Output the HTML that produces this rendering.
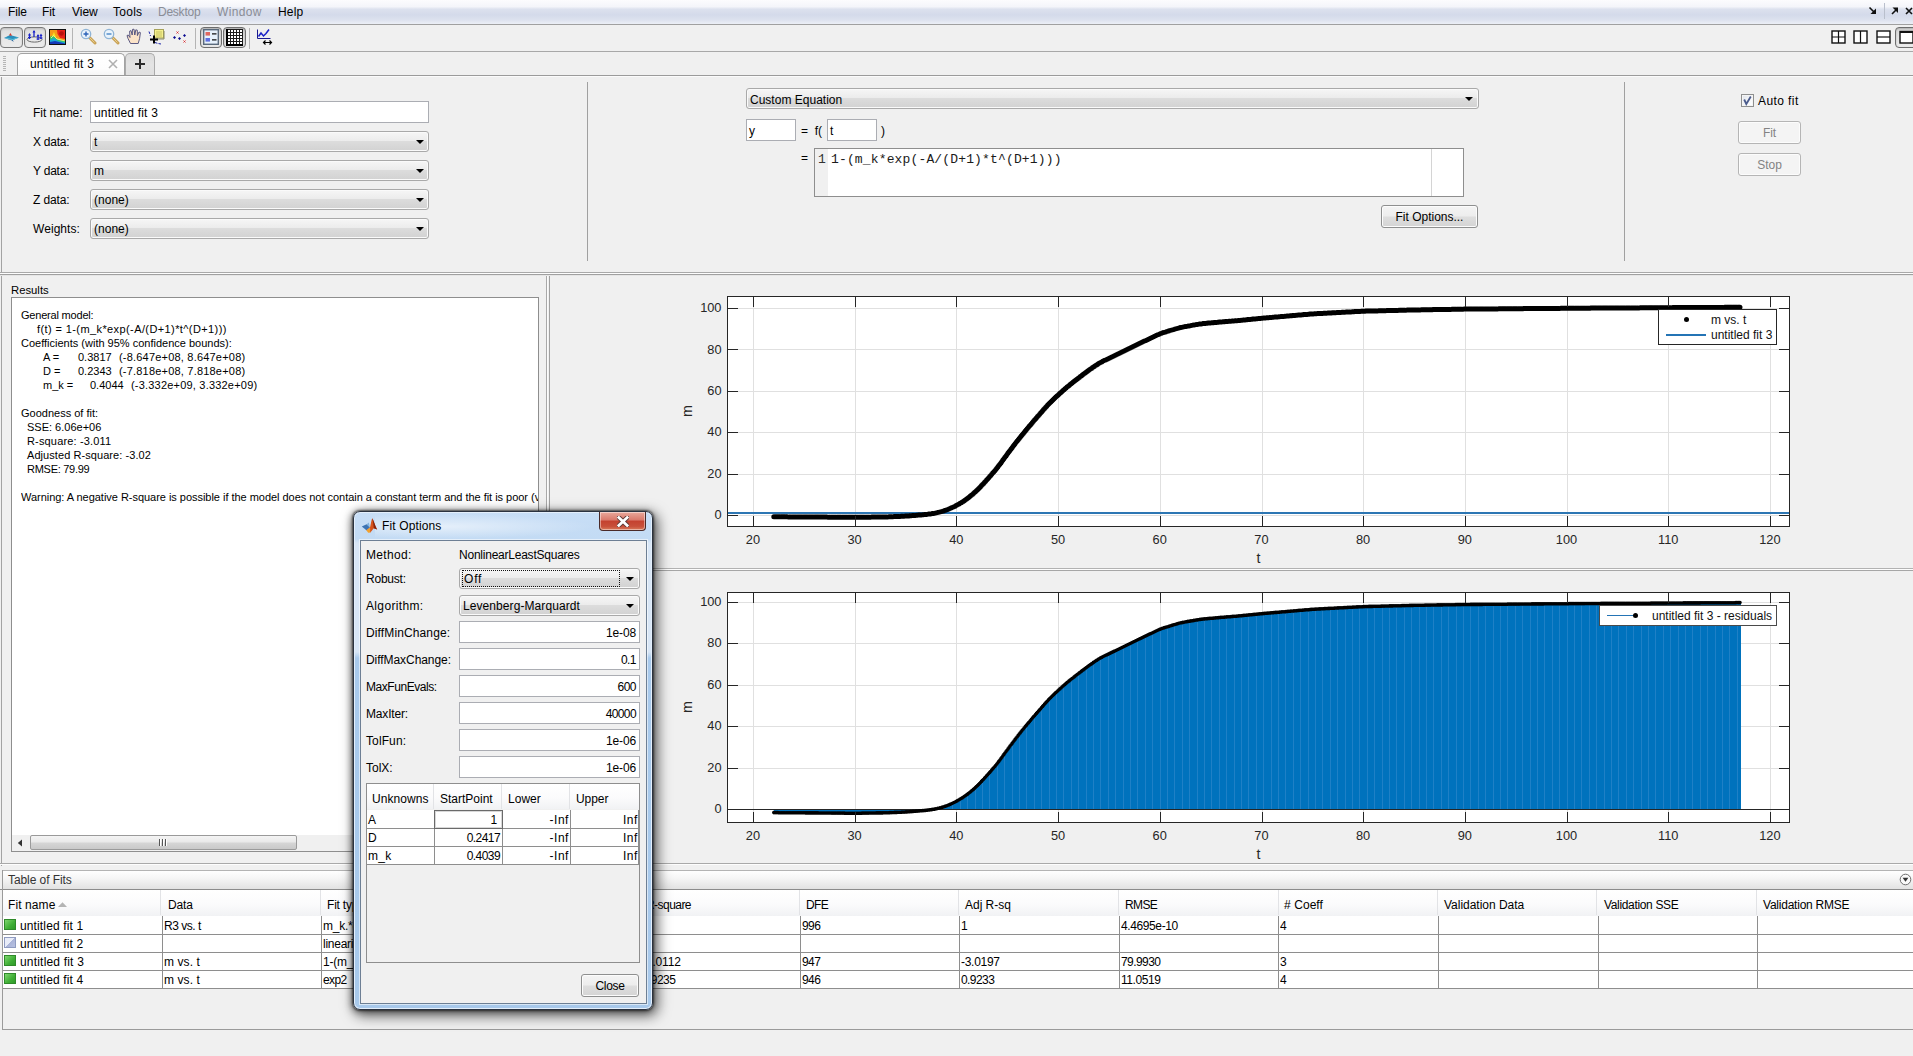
<!DOCTYPE html>
<html><head><meta charset="utf-8"><title>Curve Fitting Tool</title>
<style>
html,body{margin:0;padding:0}
body{width:1913px;height:1056px;overflow:hidden;background:#f0f0f0;position:relative;font-family:"Liberation Sans",sans-serif;font-size:12px;color:#000}
div,span{box-sizing:border-box}
.a{position:absolute}
.t{position:absolute;white-space:nowrap;line-height:14px;font-size:12px}
.r{position:absolute;white-space:nowrap;line-height:14px;font-size:11px}
.ax{position:absolute;white-space:nowrap;line-height:16px;font-size:12.8px;color:#262626}
.hl{position:absolute;height:1px;left:0;right:0}
.vl{position:absolute;width:1px}
.combo{position:absolute;height:21px;border:1px solid #a9a9a9;border-radius:3px;background:linear-gradient(#f6f6f6 0%,#ececec 45%,#dcdcdc 50%,#d2d2d2 100%);box-shadow:inset 0 0 0 1px #fafafa}
.combo i{position:absolute;right:4px;top:8px;width:0;height:0;border-left:4px solid transparent;border-right:4px solid transparent;border-top:4px solid #000}
.field{position:absolute;background:#fff;border:1px solid #abadb3}
.btn{position:absolute;border:1px solid #8e8f8f;border-radius:3px;background:linear-gradient(#f4f4f4 0%,#ededed 48%,#dedede 52%,#d4d4d4 100%);box-shadow:inset 0 0 0 1px #fcfcfc;text-align:center}
.btn.dis{border-color:#b5b5b5;background:#f4f4f4;color:#838383}
.th{position:absolute;top:891px;height:25px;background:linear-gradient(#ffffff 0%,#fafafb 50%,#f0f1f2 100%);border-right:1px solid #e3e4e6}
.cell{position:absolute;background:#fff;height:17px}
</style></head><body>

<!-- ===== menu bar ===== -->
<div class="a" style="left:0;top:0;width:1913px;height:24px;background:linear-gradient(#fcfcfe 0%,#f4f5fa 28%,#dce1ee 38%,#d4daea 62%,#dce1ee 82%,#eceff6 100%)"></div>
<div class="hl" style="top:24px;background:#a0a0a0"></div>
<div class="t" style="left:8px;top:5px;letter-spacing:-0.15px">File</div>
<div class="t" style="left:42px;top:5px;letter-spacing:-0.07px">Fit</div>
<div class="t" style="left:72px;top:5px;letter-spacing:-0.03px">View</div>
<div class="t" style="left:113px;top:5px;letter-spacing:0.27px">Tools</div>
<div class="t" style="left:158px;top:5px;color:#8a8d96;letter-spacing:-0.24px">Desktop</div>
<div class="t" style="left:217px;top:5px;color:#8a8d96;letter-spacing:0.36px">Window</div>
<div class="t" style="left:278px;top:5px;letter-spacing:0.20px">Help</div>
<svg class="a" style="left:1868px;top:6px" width="10" height="10" viewBox="0 0 10 10"><path d="M1.5 1.5L7 7" stroke="#111" stroke-width="1.6"/><path d="M8 2.5V8H2.5Z" fill="#111"/></svg>
<div class="vl" style="left:1884px;top:3px;height:16px;background:#b9bfcc"></div>
<svg class="a" style="left:1890px;top:6px" width="10" height="10" viewBox="0 0 10 10"><path d="M2 8L7 3" stroke="#111" stroke-width="1.6"/><path d="M2.5 1.5H8V7Z" fill="#111"/></svg>
<svg class="a" style="left:1905px;top:7px" width="9" height="9" viewBox="0 0 9 9"><path d="M1 1l6 6M7 1l-6 6" stroke="#111" stroke-width="1.6"/></svg>


<!-- ===== toolbar ===== -->
<div class="a" style="left:0;top:25px;width:1913px;height:26px;background:#f0f0f0"></div>
<div class="hl" style="top:51px;background:#a8a8a8"></div>
<!-- toggle buttons -->
<div class="a" style="left:0;top:27px;width:23px;height:21px;border:1px solid #7a7a7a;border-radius:4px;background:linear-gradient(#dcdcdc,#e8e8e8 60%,#ececec);box-shadow:inset 0 1px 2px #bdbdbd"></div>
<div class="a" style="left:24px;top:27px;width:22px;height:21px;border:1px solid #7a7a7a;border-radius:4px;background:linear-gradient(#dcdcdc,#e8e8e8 60%,#ececec);box-shadow:inset 0 1px 2px #bdbdbd"></div>
<svg class="a" style="left:3px;top:29px" width="17" height="17" viewBox="0 0 17 17">
 <path d="M1 9 L7 6 L16 8.5 L10 11 Z" fill="#2a8fbd"/><path d="M1 9 L10 11 L10.5 13 L9 11.5Z" fill="#1b5f9a"/>
 <path d="M6 6.3 L7.5 4 L9 6.8Z" fill="#d83a2a"/><path d="M3 9.2L10 10.5L14.5 8.8" stroke="#5fc0d8" stroke-width="1" fill="none"/>
</svg>
<svg class="a" style="left:26px;top:29px" width="18" height="17" viewBox="0 0 18 17">
 <ellipse cx="8.5" cy="10.5" rx="7.5" ry="2.6" fill="none" stroke="#6a6a6a" stroke-width="1"/>
 <path d="M3.5 10V5M8 8V2M12 11V6M15 10V6" stroke="#1a22c8" stroke-width="1.3" fill="none"/>
 <path d="M2 6.5L3.5 4L5 6.5ZM6.5 3.5L8 1L9.5 3.5ZM10.5 7.5L12 5L13.5 7.5ZM13.5 7L15 4.5L16.5 7Z" fill="#1a22c8"/>
 <path d="M2 8.5h3M10.5 10h3M13.5 9h3" stroke="#1a22c8" stroke-width="1"/>
</svg>
<svg class="a" style="left:49px;top:29px" width="17" height="16" viewBox="0 0 17 16">
 <rect x="0" y="0" width="17" height="16" fill="#111"/>
 <rect x="1" y="1" width="15" height="14" fill="#f59a1a"/>
 <path d="M1 15V8L4 6L8 10L16 12V15Z" fill="#35c46a"/><path d="M1 15V11L5 9L9 12L16 13.5V15Z" fill="#1aa7d8"/><path d="M1 15V13L6 12L16 14.5V15Z" fill="#1438b8"/>
 <path d="M8 1H16V10L11 9L8.5 5Z" fill="#e8231a"/><path d="M3 7L5 3L7 8Z" fill="#f6e11f"/><circle cx="12.5" cy="4.5" r="2.3" fill="#b8120e"/>
 <path d="M2 9L4.5 6.5L8 10L15.5 11.8" stroke="#f6f08a" stroke-width="0.9" fill="none"/>
</svg>
<div class="vl" style="left:72px;top:28px;height:21px;background:#b4b4b4"></div>
<!-- zoom in -->
<svg class="a" style="left:80px;top:28px" width="17" height="17" viewBox="0 0 17 17">
 <path d="M9 9L15 15" stroke="#c9a255" stroke-width="3" stroke-linecap="round"/><path d="M9.5 9.5L14.5 14.5" stroke="#e8cf8f" stroke-width="1"/>
 <circle cx="6" cy="6" r="4.7" fill="#e9f3fb" stroke="#8fb4d6" stroke-width="1.3"/>
 <path d="M3.5 6h5M6 3.5v5" stroke="#2b62b8" stroke-width="1.4"/>
</svg>
<svg class="a" style="left:103px;top:28px" width="17" height="17" viewBox="0 0 17 17">
 <path d="M9 9L15 15" stroke="#c9a255" stroke-width="3" stroke-linecap="round"/><path d="M9.5 9.5L14.5 14.5" stroke="#e8cf8f" stroke-width="1"/>
 <circle cx="6" cy="6" r="4.7" fill="#e9f3fb" stroke="#8fb4d6" stroke-width="1.3"/>
 <path d="M3.5 6h5" stroke="#4a86c8" stroke-width="1.4"/>
</svg>
<!-- hand -->
<svg class="a" style="left:126px;top:28px" width="17" height="17" viewBox="0 0 17 17">
 <path d="M4.5 15.5 L2 10.5 L1 7.5 L2.3 7 L4 9.5 L3.6 3.2 L5 2.6 L6.2 7 L6.5 1.4 L8 1.2 L8.8 7 L9.8 1.8 L11.3 2.2 L11.4 7.6 L13 4 L14.4 4.6 L13.6 10.5 L12.2 15.5 Z" fill="#fbe3c8" stroke="#4a4a78" stroke-width="0.9" stroke-linejoin="round"/>
</svg>
<!-- data cursor -->
<svg class="a" style="left:148px;top:28px" width="18" height="18" viewBox="0 0 18 18">
 <rect x="6.5" y="1.5" width="9" height="8.5" fill="#f5f08c" stroke="#a6a25a" stroke-width="1"/><rect x="15.5" y="3" width="1" height="8" fill="#8a8a60"/><rect x="8" y="10.5" width="8" height="1" fill="#8a8a60"/>
 <path d="M8 4h6M8 6h6M8 8h6" stroke="#b9b45c" stroke-width="0.8"/>
 <path d="M1 3.5L2.5 8M7 14.5L10 15.5L13 16" stroke="#1a22a8" stroke-width="1" stroke-dasharray="2.5 1.2" fill="none"/>
 <path d="M2 11.5h8M6 7.5v8" stroke="#000" stroke-width="2"/>
</svg>
<!-- exclude dots -->
<svg class="a" style="left:172px;top:29px" width="16" height="16" viewBox="0 0 16 16">
 <path d="M2.5 7L4 8.5L2.5 10L1 8.5ZM7.5 8L9 9.5L7.5 11L6 9.5ZM12.5 5L14 6.5L12.5 8L11 6.5Z" fill="#0a0a90"/>
 <path d="M4.5 2.5l2 2m0-2l-2 2M11.5 11.5l2 2m0-2l-2 2" stroke="#d8262a" stroke-width="0.9"/>
</svg>
<div class="vl" style="left:195px;top:28px;height:21px;background:#b4b4b4"></div>
<!-- legend / grid toggles -->
<div class="a" style="left:200px;top:27px;width:22px;height:21px;border:1px solid #6e6e6e;border-radius:4px;background:linear-gradient(#d4d4d4,#e4e4e4 60%,#eaeaea);box-shadow:inset 0 1px 2px #b0b0b0"></div>
<div class="a" style="left:223px;top:27px;width:23px;height:21px;border:1px solid #6e6e6e;border-radius:4px;background:linear-gradient(#cfcfcf,#dedede 60%,#e6e6e6);box-shadow:inset 0 1px 2px #a8a8a8"></div>
<svg class="a" style="left:203px;top:29px" width="16" height="17" viewBox="0 0 16 17">
 <rect x="0.7" y="0.7" width="14.6" height="14.6" fill="#e6f1fc" stroke="#5a6a7c" stroke-width="1.4"/>
 <rect x="2.5" y="3" width="4.5" height="3.6" fill="#e0685f"/><rect x="2.5" y="9" width="4.5" height="3.6" fill="#5f6fe0"/>
 <path d="M9 4.8h4.5M9 10.8h4.5" stroke="#111" stroke-width="1.3"/>
</svg>
<svg class="a" style="left:226px;top:29px" width="17" height="17" viewBox="0 0 17 17" shape-rendering="crispEdges">
 <rect x="1" y="0" width="16" height="16" fill="#fff"/>
 <path d="M4.5 0v16M7.5 0v16M10.5 0v16M13.5 0v16M16.5 0v16M1 0.5h16M1 3.5h16M1 6.5h16M1 9.5h16M1 12.5h16" stroke="#1c1c1c" stroke-width="1"/>
 <path d="M1 0V16M0 15.5H17" stroke="#000" stroke-width="2" fill="none"/>
</svg>
<div class="vl" style="left:249px;top:28px;height:21px;background:#b4b4b4"></div>
<svg class="a" style="left:256px;top:28px" width="18" height="18" viewBox="0 0 18 18">
 <path d="M1.5 1.5V10.5H14.5" stroke="#1a1a90" stroke-width="1" fill="none"/>
 <path d="M2.5 8.5L5 5L7.5 8L10 5.5L13 1.5" stroke="#1a22c8" stroke-width="1.5" fill="none"/>
 <path d="M7.5 14.5h8M9.5 12.5l-2 2l2 2M13.5 12.5l2 2l-2 2" stroke="#000" stroke-width="1.2" fill="none"/>
</svg>
<!-- right side layout icons -->
<svg class="a" style="left:1831px;top:30px" width="16" height="15" viewBox="0 0 16 15"><rect x="1" y="1" width="13" height="12" fill="#fff" stroke="#111" stroke-width="1.4"/><path d="M7.5 1v12M1 7h13" stroke="#111" stroke-width="1.2"/></svg>
<svg class="a" style="left:1853px;top:30px" width="16" height="15" viewBox="0 0 16 15"><rect x="1" y="1" width="13" height="12" fill="#fff" stroke="#111" stroke-width="1.4"/><path d="M7.5 1v12" stroke="#111" stroke-width="1.2"/></svg>
<svg class="a" style="left:1876px;top:30px" width="16" height="15" viewBox="0 0 16 15"><rect x="1" y="1" width="13" height="12" fill="#fff" stroke="#111" stroke-width="1.4"/><path d="M1 7h13" stroke="#111" stroke-width="1.2"/></svg>
<div class="a" style="left:1895px;top:27px;width:24px;height:21px;border:1px solid #6e6e6e;border-radius:4px;background:linear-gradient(#d8d8d8,#e6e6e6 60%,#ececec);box-shadow:inset 0 1px 2px #b0b0b0"></div>
<svg class="a" style="left:1899px;top:30px" width="16" height="15" viewBox="0 0 16 15"><rect x="1" y="1.5" width="13" height="11.5" fill="#fff" stroke="#111" stroke-width="1.4"/><path d="M1 2h13" stroke="#111" stroke-width="2"/></svg>


<!-- ===== tab bar ===== -->
<div class="a" style="left:0;top:52px;width:1913px;height:23px;background:#f0f0f0"></div>
<div class="hl" style="top:75px;background:#9b9b9b"></div>
<div class="hl" style="top:76px;background:#fbfbfb"></div>
<!-- grip -->
<div class="a" style="left:3px;top:56px;width:3px;height:16px;background:repeating-linear-gradient(#b5b5b5 0,#b5b5b5 1px,transparent 1px,transparent 2px)"></div>
<!-- active tab -->
<div class="a" style="left:17px;top:53px;width:108px;height:22px;border:1px solid #a3a3a3;border-bottom:none;border-radius:5px 5px 0 0;background:linear-gradient(#ffffff,#fdfdfd 70%,#f6f6f6)"></div>
<div class="t" style="left:30px;top:57px;letter-spacing:0.19px">untitled fit 3</div>
<svg class="a" style="left:108px;top:59px" width="10" height="10" viewBox="0 0 10 10"><path d="M1 1l8 8M9 1l-8 8" stroke="#b0b0b0" stroke-width="1.6"/></svg>
<!-- plus tab -->
<div class="a" style="left:125px;top:53px;width:30px;height:22px;border:1px solid #ababab;border-bottom:none;border-radius:5px 5px 0 0;background:linear-gradient(#dcdcdc,#e4e4e4 50%,#e0e0e0)"></div>
<svg class="a" style="left:134px;top:58px" width="12" height="12" viewBox="0 0 12 12"><path d="M1 6h10M6 1v10" stroke="#2b2b2b" stroke-width="2"/></svg>


<!-- ===== top panel ===== -->
<div class="vl" style="left:1px;top:77px;height:196px;background:#a3a3a3"></div>
<div class="hl" style="top:272px;background:#a9a9a9"></div>
<div class="hl" style="top:273px;background:#fdfdfd"></div>
<div class="hl" style="top:274px;background:#a0a0a0"></div>
<div class="hl" style="top:275px;background:#e6e6e6"></div>
<div class="vl" style="left:587px;top:82px;height:179px;background:#a0a0a0"></div>
<div class="vl" style="left:1624px;top:82px;height:179px;background:#a0a0a0"></div>
<!-- left form -->
<div class="t" style="left:33px;top:106px;letter-spacing:-0.06px">Fit name:</div>
<div class="t" style="left:33px;top:135px;letter-spacing:-0.26px">X data:</div>
<div class="t" style="left:33px;top:164px;letter-spacing:-0.22px">Y data:</div>
<div class="t" style="left:33px;top:193px;letter-spacing:-0.14px">Z data:</div>
<div class="t" style="left:33px;top:222px;letter-spacing:0.06px">Weights:</div>
<div class="field" style="left:90px;top:101px;width:339px;height:22px"></div>
<div class="t" style="left:94px;top:106px;letter-spacing:0.19px">untitled fit 3</div>
<div class="combo" style="left:90px;top:131px;width:339px"><i></i></div>
<div class="combo" style="left:90px;top:160px;width:339px"><i></i></div>
<div class="combo" style="left:90px;top:189px;width:339px"><i></i></div>
<div class="combo" style="left:90px;top:218px;width:339px"><i></i></div>
<div class="t" style="left:94px;top:135px">t</div>
<div class="t" style="left:94px;top:164px">m</div>
<div class="t" style="left:94px;top:193px;letter-spacing:0.02px">(none)</div>
<div class="t" style="left:94px;top:222px;letter-spacing:0.02px">(none)</div>
<!-- middle -->
<div class="combo" style="left:746px;top:88px;width:733px"><i style="right:5px"></i></div>
<div class="t" style="left:750px;top:93px;letter-spacing:0.01px">Custom Equation</div>
<div class="field" style="left:746px;top:119px;width:50px;height:22px"></div>
<div class="t" style="left:749px;top:124px">y</div>
<div class="t" style="left:801px;top:124px">=&nbsp;&nbsp;f(</div>
<div class="field" style="left:827px;top:119px;width:50px;height:22px"></div>
<div class="t" style="left:830px;top:124px">t</div>
<div class="t" style="left:881px;top:124px">)</div>
<div class="t" style="left:801px;top:151px">=</div>
<div class="field" style="left:814px;top:148px;width:650px;height:49px;border-color:#8e8e8e"></div>
<div class="a" style="left:815px;top:149px;width:13px;height:47px;background:#f0f0f0"></div>
<div class="vl" style="left:1431px;top:149px;height:47px;background:#d4d4d4"></div>
<div class="t" style="left:818px;top:153px;font-family:'Liberation Mono',monospace;font-size:13px;color:#333">1</div>
<div class="t" style="left:831px;top:153px;font-family:'Liberation Mono',monospace;font-size:13px;letter-spacing:0.15px;color:#1a1a1a">1-(m_k*exp(-A/(D+1)*t^(D+1)))</div>
<div class="btn" style="left:1381px;top:205px;width:97px;height:23px;line-height:22px;letter-spacing:-0.01px">Fit Options...</div>
<!-- right -->
<div class="a" style="left:1741px;top:94px;width:13px;height:13px;border:1px solid #8e8f8f;background:linear-gradient(135deg,#dfe3ea,#f6f7f9 60%,#fff);box-shadow:inset 0 0 0 1px #f4f4f4"></div>
<svg class="a" style="left:1742px;top:95px" width="11" height="11" viewBox="0 0 11 11"><path d="M2.2 4.5L4.3 9L8.8 1.5" stroke="#4a5b8c" stroke-width="1.8" fill="none"/></svg>
<div class="t" style="left:1758px;top:94px;letter-spacing:0.42px">Auto fit</div>
<div class="btn dis" style="left:1738px;top:121px;width:63px;height:23px;line-height:22px;letter-spacing:-0.07px">Fit</div>
<div class="btn dis" style="left:1738px;top:153px;width:63px;height:23px;line-height:22px">Stop</div>


<!-- ===== results ===== -->
<div class="vl" style="left:1px;top:276px;height:590px;background:#a3a3a3"></div>
<div class="t" style="left:11px;top:283px;font-size:11.3px">Results</div>
<div class="a" style="left:11px;top:297px;width:528px;height:555px;background:#fff;border:1px solid #8e8e8e"></div>
<div class="r" style="left:21px;top:308px;letter-spacing:-0.2px">General model:</div>
<div class="r" style="left:37px;top:322px;letter-spacing:0.4px">f(t) = 1-(m_k*exp(-A/(D+1)*t^(D+1)))</div>
<div class="r" style="left:21px;top:336px">Coefficients (with 95% confidence bounds):</div>
<div class="r" style="left:43px;top:350px">A =</div><div class="r" style="left:78px;top:350px">0.3817</div><div class="r" style="left:119px;top:350px;letter-spacing:0.2px">(-8.647e+08, 8.647e+08)</div>
<div class="r" style="left:43px;top:364px">D =</div><div class="r" style="left:78px;top:364px">0.2343</div><div class="r" style="left:119px;top:364px;letter-spacing:0.2px">(-7.818e+08, 7.818e+08)</div>
<div class="r" style="left:43px;top:378px">m_k =</div><div class="r" style="left:90px;top:378px">0.4044</div><div class="r" style="left:131px;top:378px;letter-spacing:0.2px">(-3.332e+09, 3.332e+09)</div>
<div class="r" style="left:21px;top:406px">Goodness of fit:</div>
<div class="r" style="left:27px;top:420px">SSE: 6.06e+06</div>
<div class="r" style="left:27px;top:434px;letter-spacing:0.16px">R-square: -3.011</div>
<div class="r" style="left:27px;top:448px;letter-spacing:0.07px">Adjusted R-square: -3.02</div>
<div class="r" style="left:27px;top:462px;letter-spacing:-0.27px">RMSE: 79.99</div>
<div class="a" style="left:21px;top:490px;width:517px;height:14px;overflow:hidden"><div class="r" style="left:0;top:0;letter-spacing:-0.03px">Warning: A negative R-square is possible if the model does not contain a constant term and the fit is poor (v</div></div>
<!-- h scrollbar -->
<div class="a" style="left:12px;top:835px;width:526px;height:16px;background:#f0f0f0"></div>
<svg class="a" style="left:17px;top:839px" width="6" height="8" viewBox="0 0 6 8"><path d="M5 0.5V7.5L0.8 4Z" fill="#333"/></svg>
<div class="a" style="left:30px;top:835px;width:267px;height:15px;border:1px solid #9a9a9a;border-radius:2px;background:linear-gradient(#f4f4f4 0%,#e9e9e9 48%,#d6d6d6 52%,#c9c9c9 100%)"></div>
<div class="a" style="left:159px;top:839px;width:8px;height:7px;background:repeating-linear-gradient(90deg,#555 0,#555 1px,#fff 1px,#fff 2px,transparent 2px,transparent 3px)"></div>


<!-- ===== plots ===== -->
<!-- vertical divider -->
<div class="vl" style="left:546px;top:276px;height:588px;background:#a8a8a8"></div>
<div class="vl" style="left:547px;top:276px;height:588px;background:#fbfbfb"></div>
<div class="vl" style="left:548px;top:276px;height:588px;background:#f0f0f0"></div>
<div class="vl" style="left:549px;top:276px;height:588px;background:#a0a0a0"></div>
<!-- mid horizontal divider -->
<div class="a" style="left:550px;top:568px;width:1363px;height:1px;background:#b2b2b2"></div>
<div class="a" style="left:550px;top:569px;width:1363px;height:1px;background:#fdfdfd"></div>
<div class="a" style="left:550px;top:570px;width:1363px;height:1px;background:#a6a6a6"></div>
<!-- bottom divider -->
<div class="hl" style="top:863px;background:#a9a9a9"></div>
<div class="hl" style="top:864px;background:#fdfdfd"></div>

<svg style="position:absolute;left:727px;top:296px;overflow:visible" width="1063" height="231" viewBox="0 0 1063 231">
<rect x="0.5" y="0.5" width="1062" height="230" fill="#fff"/>
<path d="M26.5 0V231M128.5 0V231M229.5 0V231M331.5 0V231M433.5 0V231M535.5 0V231M636.5 0V231M738.5 0V231M840.5 0V231M941.5 0V231M1043.5 0V231M0 219.5H1063M0 178.5H1063M0 136.5H1063M0 95.5H1063M0 53.5H1063M0 12.5H1063" stroke="#e0e0e0" stroke-width="1" fill="none"/>
<path d="M0 217.0H1063" stroke="#2d76b3" stroke-width="2" fill="none"/>
<path d="M46.8 220.8h0M47.9 220.8h0M48.9 220.8h0M49.9 220.8h0M50.9 220.8h0M51.9 220.8h0M52.9 220.8h0M54.0 220.8h0M55.0 220.8h0M56.0 220.8h0M57.0 220.8h0M58.0 220.8h0M59.1 220.8h0M60.1 220.8h0M61.1 220.9h0M62.1 220.9h0M63.1 220.9h0M64.1 220.9h0M65.2 220.9h0M66.2 220.9h0M67.2 220.9h0M68.2 220.9h0M69.2 220.9h0M70.3 220.9h0M71.3 220.9h0M72.3 220.9h0M73.3 220.9h0M74.3 221.0h0M75.3 221.0h0M76.4 221.0h0M77.4 221.0h0M78.4 221.0h0M79.4 221.0h0M80.4 221.0h0M81.5 221.0h0M82.5 221.0h0M83.5 221.0h0M84.5 221.0h0M85.5 221.0h0M86.5 221.0h0M87.6 221.1h0M88.6 221.1h0M89.6 221.1h0M90.6 221.1h0M91.6 221.1h0M92.7 221.1h0M93.7 221.1h0M94.7 221.1h0M95.7 221.1h0M96.7 221.1h0M97.7 221.1h0M98.8 221.1h0M99.8 221.1h0M100.8 221.2h0M101.8 221.2h0M102.8 221.2h0M103.9 221.2h0M104.9 221.2h0M105.9 221.2h0M106.9 221.2h0M107.9 221.2h0M108.9 221.2h0M110.0 221.2h0M111.0 221.2h0M112.0 221.2h0M113.0 221.2h0M114.0 221.3h0M115.1 221.3h0M116.1 221.3h0M117.1 221.3h0M118.1 221.3h0M119.1 221.3h0M120.1 221.3h0M121.2 221.3h0M122.2 221.3h0M123.2 221.3h0M124.2 221.3h0M125.2 221.3h0M126.2 221.3h0M127.3 221.3h0M128.3 221.3h0M129.3 221.3h0M130.3 221.3h0M131.3 221.3h0M132.4 221.3h0M133.4 221.3h0M134.4 221.3h0M135.4 221.3h0M136.4 221.3h0M137.4 221.2h0M138.5 221.2h0M139.5 221.2h0M140.5 221.2h0M141.5 221.2h0M142.5 221.2h0M143.6 221.2h0M144.6 221.1h0M145.6 221.1h0M146.6 221.1h0M147.6 221.1h0M148.6 221.1h0M149.7 221.1h0M150.7 221.1h0M151.7 221.0h0M152.7 221.0h0M153.7 221.0h0M154.8 221.0h0M155.8 221.0h0M156.8 221.0h0M157.8 220.9h0M158.8 220.9h0M159.8 220.9h0M160.9 220.9h0M161.9 220.8h0M162.9 220.8h0M163.9 220.7h0M164.9 220.7h0M166.0 220.7h0M167.0 220.6h0M168.0 220.6h0M169.0 220.5h0M170.0 220.5h0M171.0 220.4h0M172.1 220.4h0M173.1 220.4h0M174.1 220.3h0M175.1 220.3h0M176.1 220.2h0M177.2 220.2h0M178.2 220.1h0M179.2 220.1h0M180.2 220.0h0M181.2 219.9h0M182.2 219.9h0M183.3 219.8h0M184.3 219.7h0M185.3 219.6h0M186.3 219.5h0M187.3 219.4h0M188.4 219.4h0M189.4 219.3h0M190.4 219.2h0M191.4 219.1h0M192.4 219.0h0M193.4 218.9h0M194.5 218.9h0M195.5 218.8h0M196.5 218.7h0M197.5 218.6h0M198.5 218.5h0M199.6 218.4h0M200.6 218.3h0M201.6 218.1h0M202.6 218.0h0M203.6 217.9h0M204.6 217.7h0M205.7 217.6h0M206.7 217.4h0M207.7 217.2h0M208.7 217.0h0M209.7 216.8h0M210.7 216.6h0M211.8 216.3h0M212.8 216.1h0M213.8 215.8h0M214.8 215.5h0M215.8 215.2h0M216.9 214.9h0M217.9 214.6h0M218.9 214.2h0M219.9 213.8h0M220.9 213.4h0M221.9 213.0h0M223.0 212.6h0M224.0 212.1h0M225.0 211.6h0M226.0 211.2h0M227.0 210.7h0M228.1 210.2h0M229.1 209.6h0M230.1 209.1h0M231.1 208.5h0M232.1 207.9h0M233.1 207.3h0M234.2 206.7h0M235.2 206.0h0M236.2 205.4h0M237.2 204.7h0M238.2 204.0h0M239.3 203.3h0M240.3 202.5h0M241.3 201.8h0M242.3 201.0h0M243.3 200.1h0M244.3 199.3h0M245.4 198.4h0M246.4 197.5h0M247.4 196.6h0M248.4 195.7h0M249.4 194.8h0M250.5 193.8h0M251.5 192.8h0M252.5 191.8h0M253.5 190.7h0M254.5 189.6h0M255.5 188.5h0M256.6 187.4h0M257.6 186.3h0M258.6 185.2h0M259.6 184.1h0M260.6 182.9h0M261.7 181.8h0M262.7 180.6h0M263.7 179.5h0M264.7 178.3h0M265.7 177.1h0M266.7 175.9h0M267.8 174.7h0M268.8 173.5h0M269.8 172.2h0M270.8 170.9h0M271.8 169.6h0M272.9 168.3h0M273.9 166.9h0M274.9 165.5h0M275.9 164.1h0M276.9 162.7h0M277.9 161.3h0M279.0 159.9h0M280.0 158.5h0M281.0 157.1h0M282.0 155.8h0M283.0 154.4h0M284.1 153.0h0M285.1 151.7h0M286.1 150.3h0M287.1 149.0h0M288.1 147.7h0M289.1 146.3h0M290.2 145.0h0M291.2 143.7h0M292.2 142.4h0M293.2 141.2h0M294.2 139.9h0M295.2 138.7h0M296.3 137.4h0M297.3 136.2h0M298.3 134.9h0M299.3 133.7h0M300.3 132.5h0M301.4 131.3h0M302.4 130.1h0M303.4 128.9h0M304.4 127.7h0M305.4 126.5h0M306.4 125.3h0M307.5 124.1h0M308.5 122.9h0M309.5 121.8h0M310.5 120.6h0M311.5 119.4h0M312.6 118.3h0M313.6 117.1h0M314.6 115.9h0M315.6 114.8h0M316.6 113.6h0M317.6 112.5h0M318.7 111.3h0M319.7 110.2h0M320.7 109.1h0M321.7 108.0h0M322.7 107.0h0M323.8 106.0h0M324.8 105.0h0M325.8 104.0h0M326.8 103.0h0M327.8 102.0h0M328.8 101.1h0M329.9 100.1h0M330.9 99.2h0M331.9 98.2h0M332.9 97.3h0M333.9 96.4h0M335.0 95.5h0M336.0 94.6h0M337.0 93.7h0M338.0 92.8h0M339.0 91.9h0M340.0 91.1h0M341.1 90.2h0M342.1 89.4h0M343.1 88.5h0M344.1 87.7h0M345.1 86.9h0M346.2 86.1h0M347.2 85.3h0M348.2 84.5h0M349.2 83.8h0M350.2 83.0h0M351.2 82.2h0M352.3 81.4h0M353.3 80.6h0M354.3 79.9h0M355.3 79.1h0M356.3 78.3h0M357.4 77.6h0M358.4 76.8h0M359.4 76.0h0M360.4 75.3h0M361.4 74.5h0M362.4 73.8h0M363.5 73.1h0M364.5 72.4h0M365.5 71.6h0M366.5 70.9h0M367.5 70.2h0M368.6 69.5h0M369.6 68.9h0M370.6 68.2h0M371.6 67.6h0M372.6 67.0h0M373.6 66.4h0M374.7 65.9h0M375.7 65.3h0M376.7 64.8h0M377.7 64.3h0M378.7 63.9h0M379.7 63.4h0M380.8 62.9h0M381.8 62.4h0M382.8 61.9h0M383.8 61.4h0M384.8 60.9h0M385.9 60.4h0M386.9 60.0h0M387.9 59.5h0M388.9 59.0h0M389.9 58.5h0M390.9 58.0h0M392.0 57.5h0M393.0 57.0h0M394.0 56.5h0M395.0 56.0h0M396.0 55.5h0M397.1 55.0h0M398.1 54.5h0M399.1 54.1h0M400.1 53.6h0M401.1 53.1h0M402.1 52.6h0M403.2 52.1h0M404.2 51.6h0M405.2 51.1h0M406.2 50.6h0M407.2 50.1h0M408.3 49.6h0M409.3 49.1h0M410.3 48.6h0M411.3 48.1h0M412.3 47.6h0M413.3 47.1h0M414.4 46.6h0M415.4 46.1h0M416.4 45.6h0M417.4 45.1h0M418.4 44.7h0M419.5 44.2h0M420.5 43.7h0M421.5 43.2h0M422.5 42.7h0M423.5 42.2h0M424.5 41.7h0M425.6 41.2h0M426.6 40.8h0M427.6 40.3h0M428.6 39.8h0M429.6 39.3h0M430.7 38.8h0M431.7 38.4h0M432.7 38.0h0M433.7 37.6h0M434.7 37.2h0M435.7 36.8h0M436.8 36.5h0M437.8 36.2h0M438.8 35.9h0M439.8 35.6h0M440.8 35.2h0M441.9 34.9h0M442.9 34.6h0M443.9 34.3h0M444.9 34.0h0M445.9 33.7h0M446.9 33.4h0M448.0 33.1h0M449.0 32.8h0M450.0 32.5h0M451.0 32.2h0M452.0 31.9h0M453.1 31.6h0M454.1 31.4h0M455.1 31.2h0M456.1 30.9h0M457.1 30.7h0M458.1 30.6h0M459.2 30.4h0M460.2 30.2h0M461.2 30.0h0M462.2 29.9h0M463.2 29.7h0M464.2 29.5h0M465.3 29.3h0M466.3 29.1h0M467.3 29.0h0M468.3 28.8h0M469.3 28.6h0M470.4 28.4h0M471.4 28.3h0M472.4 28.1h0M473.4 28.0h0M474.4 27.9h0M475.4 27.7h0M476.5 27.6h0M477.5 27.5h0M478.5 27.4h0M479.5 27.3h0M480.5 27.2h0M481.6 27.1h0M482.6 27.0h0M483.6 26.9h0M484.6 26.8h0M485.6 26.8h0M486.6 26.7h0M487.7 26.6h0M488.7 26.5h0M489.7 26.4h0M490.7 26.3h0M491.7 26.2h0M492.8 26.1h0M493.8 26.0h0M494.8 25.9h0M495.8 25.8h0M496.8 25.8h0M497.8 25.7h0M498.9 25.6h0M499.9 25.5h0M500.9 25.4h0M501.9 25.3h0M502.9 25.3h0M504.0 25.2h0M505.0 25.1h0M506.0 25.0h0M507.0 24.9h0M508.0 24.8h0M509.0 24.8h0M510.1 24.7h0M511.1 24.6h0M512.1 24.5h0M513.1 24.4h0M514.1 24.3h0M515.2 24.2h0M516.2 24.1h0M517.2 24.0h0M518.2 23.9h0M519.2 23.8h0M520.2 23.7h0M521.3 23.6h0M522.3 23.5h0M523.3 23.4h0M524.3 23.3h0M525.3 23.2h0M526.4 23.1h0M527.4 23.0h0M528.4 22.9h0M529.4 22.8h0M530.4 22.7h0M531.4 22.6h0M532.5 22.5h0M533.5 22.4h0M534.5 22.3h0M535.5 22.2h0M536.5 22.1h0M537.6 22.0h0M538.6 21.9h0M539.6 21.8h0M540.6 21.7h0M541.6 21.7h0M542.6 21.6h0M543.7 21.5h0M544.7 21.4h0M545.7 21.3h0M546.7 21.2h0M547.7 21.1h0M548.7 21.1h0M549.8 21.0h0M550.8 20.9h0M551.8 20.8h0M552.8 20.7h0M553.8 20.6h0M554.9 20.5h0M555.9 20.4h0M556.9 20.4h0M557.9 20.3h0M558.9 20.2h0M559.9 20.1h0M561.0 20.0h0M562.0 19.9h0M563.0 19.8h0M564.0 19.7h0M565.0 19.7h0M566.1 19.6h0M567.1 19.5h0M568.1 19.4h0M569.1 19.3h0M570.1 19.2h0M571.1 19.1h0M572.2 19.1h0M573.2 19.0h0M574.2 18.9h0M575.2 18.8h0M576.2 18.7h0M577.3 18.6h0M578.3 18.5h0M579.3 18.4h0M580.3 18.4h0M581.3 18.3h0M582.3 18.2h0M583.4 18.1h0M584.4 18.0h0M585.4 18.0h0M586.4 17.9h0M587.4 17.8h0M588.5 17.8h0M589.5 17.7h0M590.5 17.6h0M591.5 17.6h0M592.5 17.5h0M593.5 17.5h0M594.6 17.4h0M595.6 17.4h0M596.6 17.3h0M597.6 17.3h0M598.6 17.2h0M599.7 17.2h0M600.7 17.1h0M601.7 17.0h0M602.7 17.0h0M603.7 16.9h0M604.7 16.9h0M605.8 16.8h0M606.8 16.8h0M607.8 16.7h0M608.8 16.7h0M609.8 16.6h0M610.9 16.6h0M611.9 16.5h0M612.9 16.5h0M613.9 16.4h0M614.9 16.3h0M615.9 16.3h0M617.0 16.2h0M618.0 16.2h0M619.0 16.1h0M620.0 16.1h0M621.0 16.0h0M622.1 16.0h0M623.1 15.9h0M624.1 15.9h0M625.1 15.8h0M626.1 15.8h0M627.1 15.7h0M628.2 15.6h0M629.2 15.6h0M630.2 15.5h0M631.2 15.5h0M632.2 15.4h0M633.2 15.4h0M634.3 15.3h0M635.3 15.3h0M636.3 15.2h0M637.3 15.2h0M638.3 15.2h0M639.4 15.1h0M640.4 15.1h0M641.4 15.1h0M642.4 15.1h0M643.4 15.0h0M644.4 15.0h0M645.5 15.0h0M646.5 15.0h0M647.5 14.9h0M648.5 14.9h0M649.5 14.9h0M650.6 14.9h0M651.6 14.8h0M652.6 14.8h0M653.6 14.8h0M654.6 14.8h0M655.6 14.7h0M656.7 14.7h0M657.7 14.7h0M658.7 14.7h0M659.7 14.6h0M660.7 14.6h0M661.8 14.6h0M662.8 14.6h0M663.8 14.5h0M664.8 14.5h0M665.8 14.5h0M666.8 14.5h0M667.9 14.4h0M668.9 14.4h0M669.9 14.4h0M670.9 14.4h0M671.9 14.3h0M673.0 14.3h0M674.0 14.3h0M675.0 14.3h0M676.0 14.2h0M677.0 14.2h0M678.0 14.2h0M679.1 14.2h0M680.1 14.1h0M681.1 14.1h0M682.1 14.1h0M683.1 14.1h0M684.2 14.0h0M685.2 14.0h0M686.2 14.0h0M687.2 14.0h0M688.2 13.9h0M689.2 13.9h0M690.3 13.9h0M691.3 13.9h0M692.3 13.9h0M693.3 13.9h0M694.3 13.8h0M695.4 13.8h0M696.4 13.8h0M697.4 13.8h0M698.4 13.8h0M699.4 13.8h0M700.4 13.7h0M701.5 13.7h0M702.5 13.7h0M703.5 13.7h0M704.5 13.7h0M705.5 13.7h0M706.6 13.6h0M707.6 13.6h0M708.6 13.6h0M709.6 13.6h0M710.6 13.6h0M711.6 13.6h0M712.7 13.5h0M713.7 13.5h0M714.7 13.5h0M715.7 13.5h0M716.7 13.5h0M717.7 13.5h0M718.8 13.4h0M719.8 13.4h0M720.8 13.4h0M721.8 13.4h0M722.8 13.4h0M723.9 13.4h0M724.9 13.3h0M725.9 13.3h0M726.9 13.3h0M727.9 13.3h0M728.9 13.3h0M730.0 13.3h0M731.0 13.2h0M732.0 13.2h0M733.0 13.2h0M734.0 13.2h0M735.1 13.2h0M736.1 13.2h0M737.1 13.1h0M738.1 13.1h0M739.1 13.1h0M740.1 13.1h0M741.2 13.1h0M742.2 13.1h0M743.2 13.1h0M744.2 13.1h0M745.2 13.1h0M746.3 13.1h0M747.3 13.0h0M748.3 13.0h0M749.3 13.0h0M750.3 13.0h0M751.3 13.0h0M752.4 13.0h0M753.4 13.0h0M754.4 13.0h0M755.4 13.0h0M756.4 13.0h0M757.5 13.0h0M758.5 13.0h0M759.5 12.9h0M760.5 12.9h0M761.5 12.9h0M762.5 12.9h0M763.6 12.9h0M764.6 12.9h0M765.6 12.9h0M766.6 12.9h0M767.6 12.9h0M768.7 12.9h0M769.7 12.9h0M770.7 12.9h0M771.7 12.8h0M772.7 12.8h0M773.7 12.8h0M774.8 12.8h0M775.8 12.8h0M776.8 12.8h0M777.8 12.8h0M778.8 12.8h0M779.9 12.8h0M780.9 12.8h0M781.9 12.8h0M782.9 12.8h0M783.9 12.8h0M784.9 12.7h0M786.0 12.7h0M787.0 12.7h0M788.0 12.7h0M789.0 12.7h0M790.0 12.7h0M791.1 12.7h0M792.1 12.7h0M793.1 12.7h0M794.1 12.7h0M795.1 12.7h0M796.1 12.7h0M797.2 12.6h0M798.2 12.6h0M799.2 12.6h0M800.2 12.6h0M801.2 12.6h0M802.2 12.6h0M803.3 12.6h0M804.3 12.6h0M805.3 12.6h0M806.3 12.6h0M807.3 12.6h0M808.4 12.6h0M809.4 12.5h0M810.4 12.5h0M811.4 12.5h0M812.4 12.5h0M813.4 12.5h0M814.5 12.5h0M815.5 12.5h0M816.5 12.5h0M817.5 12.5h0M818.5 12.5h0M819.6 12.5h0M820.6 12.5h0M821.6 12.4h0M822.6 12.4h0M823.6 12.4h0M824.6 12.4h0M825.7 12.4h0M826.7 12.4h0M827.7 12.4h0M828.7 12.4h0M829.7 12.4h0M830.8 12.4h0M831.8 12.4h0M832.8 12.4h0M833.8 12.3h0M834.8 12.3h0M835.8 12.3h0M836.9 12.3h0M837.9 12.3h0M838.9 12.3h0M839.9 12.3h0M840.9 12.3h0M842.0 12.3h0M843.0 12.3h0M844.0 12.3h0M845.0 12.3h0M846.0 12.3h0M847.0 12.3h0M848.1 12.2h0M849.1 12.2h0M850.1 12.2h0M851.1 12.2h0M852.1 12.2h0M853.2 12.2h0M854.2 12.2h0M855.2 12.2h0M856.2 12.2h0M857.2 12.2h0M858.2 12.2h0M859.3 12.2h0M860.3 12.2h0M861.3 12.2h0M862.3 12.2h0M863.3 12.2h0M864.4 12.1h0M865.4 12.1h0M866.4 12.1h0M867.4 12.1h0M868.4 12.1h0M869.4 12.1h0M870.5 12.1h0M871.5 12.1h0M872.5 12.1h0M873.5 12.1h0M874.5 12.1h0M875.6 12.1h0M876.6 12.1h0M877.6 12.1h0M878.6 12.1h0M879.6 12.1h0M880.6 12.0h0M881.7 12.0h0M882.7 12.0h0M883.7 12.0h0M884.7 12.0h0M885.7 12.0h0M886.7 12.0h0M887.8 12.0h0M888.8 12.0h0M889.8 12.0h0M890.8 12.0h0M891.8 12.0h0M892.9 12.0h0M893.9 12.0h0M894.9 12.0h0M895.9 12.0h0M896.9 11.9h0M897.9 11.9h0M899.0 11.9h0M900.0 11.9h0M901.0 11.9h0M902.0 11.9h0M903.0 11.9h0M904.1 11.9h0M905.1 11.9h0M906.1 11.9h0M907.1 11.9h0M908.1 11.9h0M909.1 11.9h0M910.2 11.9h0M911.2 11.9h0M912.2 11.9h0M913.2 11.8h0M914.2 11.8h0M915.3 11.8h0M916.3 11.8h0M917.3 11.8h0M918.3 11.8h0M919.3 11.8h0M920.3 11.8h0M921.4 11.8h0M922.4 11.8h0M923.4 11.8h0M924.4 11.8h0M925.4 11.8h0M926.5 11.8h0M927.5 11.8h0M928.5 11.8h0M929.5 11.7h0M930.5 11.7h0M931.5 11.7h0M932.6 11.7h0M933.6 11.7h0M934.6 11.7h0M935.6 11.7h0M936.6 11.7h0M937.7 11.7h0M938.7 11.7h0M939.7 11.7h0M940.7 11.7h0M941.7 11.7h0M942.7 11.7h0M943.8 11.7h0M944.8 11.7h0M945.8 11.6h0M946.8 11.6h0M947.8 11.6h0M948.9 11.6h0M949.9 11.6h0M950.9 11.6h0M951.9 11.6h0M952.9 11.6h0M953.9 11.6h0M955.0 11.6h0M956.0 11.6h0M957.0 11.6h0M958.0 11.6h0M959.0 11.6h0M960.1 11.6h0M961.1 11.6h0M962.1 11.6h0M963.1 11.5h0M964.1 11.5h0M965.1 11.5h0M966.2 11.5h0M967.2 11.5h0M968.2 11.5h0M969.2 11.5h0M970.2 11.5h0M971.2 11.5h0M972.3 11.5h0M973.3 11.5h0M974.3 11.5h0M975.3 11.5h0M976.3 11.5h0M977.4 11.5h0M978.4 11.5h0M979.4 11.5h0M980.4 11.4h0M981.4 11.4h0M982.4 11.4h0M983.5 11.4h0M984.5 11.4h0M985.5 11.4h0M986.5 11.4h0M987.5 11.4h0M988.6 11.4h0M989.6 11.4h0M990.6 11.4h0M991.6 11.4h0M992.6 11.4h0M993.6 11.4h0M994.7 11.4h0M995.7 11.4h0M996.7 11.4h0M997.7 11.3h0M998.7 11.3h0M999.8 11.3h0M1000.8 11.3h0M1001.8 11.3h0M1002.8 11.3h0M1003.8 11.3h0M1004.8 11.3h0M1005.9 11.3h0M1006.9 11.3h0M1007.9 11.3h0M1008.9 11.3h0M1009.9 11.3h0M1011.0 11.3h0M1012.0 11.3h0M1013.0 11.3h0" stroke="#000" stroke-width="5" stroke-linecap="round" fill="none"/>
<path d="M26.5 0v11M26.5 231v-11M128.5 0v11M128.5 231v-11M229.5 0v11M229.5 231v-11M331.5 0v11M331.5 231v-11M433.5 0v11M433.5 231v-11M535.5 0v11M535.5 231v-11M636.5 0v11M636.5 231v-11M738.5 0v11M738.5 231v-11M840.5 0v11M840.5 231v-11M941.5 0v11M941.5 231v-11M1043.5 0v11M1043.5 231v-11M0 219.5h11M1063 219.5h-11M0 178.5h11M1063 178.5h-11M0 136.5h11M1063 136.5h-11M0 95.5h11M1063 95.5h-11M0 53.5h11M1063 53.5h-11M0 12.5h11M1063 12.5h-11" stroke="#262626" stroke-width="1" fill="none"/>
<rect x="0.5" y="0.5" width="1062" height="230" fill="none" stroke="#262626" stroke-width="1"/>
</svg>
<div class="ax" style="left:732.9px;top:531.5px;width:40px;text-align:center">20</div>
<div class="ax" style="left:834.6px;top:531.5px;width:40px;text-align:center">30</div>
<div class="ax" style="left:936.3px;top:531.5px;width:40px;text-align:center">40</div>
<div class="ax" style="left:1038.0px;top:531.5px;width:40px;text-align:center">50</div>
<div class="ax" style="left:1139.7px;top:531.5px;width:40px;text-align:center">60</div>
<div class="ax" style="left:1241.4px;top:531.5px;width:40px;text-align:center">70</div>
<div class="ax" style="left:1343.1px;top:531.5px;width:40px;text-align:center">80</div>
<div class="ax" style="left:1444.8px;top:531.5px;width:40px;text-align:center">90</div>
<div class="ax" style="left:1546.5px;top:531.5px;width:40px;text-align:center">100</div>
<div class="ax" style="left:1648.2px;top:531.5px;width:40px;text-align:center">110</div>
<div class="ax" style="left:1749.9px;top:531.5px;width:40px;text-align:center">120</div>
<div class="ax" style="left:681.5px;top:507.1px;width:40px;text-align:right">0</div>
<div class="ax" style="left:681.5px;top:465.7px;width:40px;text-align:right">20</div>
<div class="ax" style="left:681.5px;top:424.3px;width:40px;text-align:right">40</div>
<div class="ax" style="left:681.5px;top:382.9px;width:40px;text-align:right">60</div>
<div class="ax" style="left:681.5px;top:341.5px;width:40px;text-align:right">80</div>
<div class="ax" style="left:681.5px;top:300.1px;width:40px;text-align:right">100</div>
<div class="ax" style="left:1256.5px;top:549.5px;font-size:14.2px">t</div>
<div class="ax" style="left:681px;top:402.5px;width:12px;font-size:14.2px;transform:rotate(-90deg);transform-origin:50% 50%">m</div>
<svg style="position:absolute;left:727px;top:592px;overflow:visible" width="1063" height="231" viewBox="0 0 1063 231">
<rect x="0.5" y="0.5" width="1062" height="230" fill="#fff"/>
<path d="M26.5 0V231M128.5 0V231M229.5 0V231M331.5 0V231M433.5 0V231M535.5 0V231M636.5 0V231M738.5 0V231M840.5 0V231M941.5 0V231M1043.5 0V231M0 217.5H1063M0 176.5H1063M0 134.5H1063M0 93.5H1063M0 51.5H1063M0 10.5H1063" stroke="#e0e0e0" stroke-width="1" fill="none"/>
<polygon points="46.8,217.5 46.8,220.6 47.9,220.6 48.9,220.6 49.9,220.6 50.9,220.6 51.9,220.7 52.9,220.7 54.0,220.7 55.0,220.7 56.0,220.7 57.0,220.7 58.0,220.7 59.1,220.7 60.1,220.7 61.1,220.7 62.1,220.7 63.1,220.7 64.1,220.7 65.2,220.8 66.2,220.8 67.2,220.8 68.2,220.8 69.2,220.8 70.3,220.8 71.3,220.8 72.3,220.8 73.3,220.8 74.3,220.8 75.3,220.8 76.4,220.8 77.4,220.8 78.4,220.9 79.4,220.9 80.4,220.9 81.5,220.9 82.5,220.9 83.5,220.9 84.5,220.9 85.5,220.9 86.5,220.9 87.6,220.9 88.6,220.9 89.6,220.9 90.6,220.9 91.6,221.0 92.7,221.0 93.7,221.0 94.7,221.0 95.7,221.0 96.7,221.0 97.7,221.0 98.8,221.0 99.8,221.0 100.8,221.0 101.8,221.0 102.8,221.0 103.9,221.0 104.9,221.1 105.9,221.1 106.9,221.1 107.9,221.1 108.9,221.1 110.0,221.1 111.0,221.1 112.0,221.1 113.0,221.1 114.0,221.1 115.1,221.1 116.1,221.1 117.1,221.1 118.1,221.2 119.1,221.2 120.1,221.2 121.2,221.2 122.2,221.2 123.2,221.2 124.2,221.2 125.2,221.2 126.2,221.2 127.3,221.2 128.3,221.2 129.3,221.2 130.3,221.2 131.3,221.2 132.4,221.2 133.4,221.2 134.4,221.2 135.4,221.1 136.4,221.1 137.4,221.1 138.5,221.1 139.5,221.1 140.5,221.1 141.5,221.1 142.5,221.0 143.6,221.0 144.6,221.0 145.6,221.0 146.6,221.0 147.6,221.0 148.6,221.0 149.7,220.9 150.7,220.9 151.7,220.9 152.7,220.9 153.7,220.9 154.8,220.9 155.8,220.9 156.8,220.8 157.8,220.8 158.8,220.8 159.8,220.8 160.9,220.7 161.9,220.7 162.9,220.6 163.9,220.6 164.9,220.6 166.0,220.5 167.0,220.5 168.0,220.4 169.0,220.4 170.0,220.4 171.0,220.3 172.1,220.3 173.1,220.2 174.1,220.2 175.1,220.1 176.1,220.1 177.2,220.1 178.2,220.0 179.2,219.9 180.2,219.9 181.2,219.8 182.2,219.7 183.3,219.6 184.3,219.6 185.3,219.5 186.3,219.4 187.3,219.3 188.4,219.2 189.4,219.1 190.4,219.1 191.4,219.0 192.4,218.9 193.4,218.8 194.5,218.7 195.5,218.6 196.5,218.6 197.5,218.5 198.5,218.4 199.6,218.2 200.6,218.1 201.6,218.0 202.6,217.9 203.6,217.7 204.6,217.6 205.7,217.4 206.7,217.3 207.7,217.1 208.7,216.9 209.7,216.7 210.7,216.4 211.8,216.2 212.8,215.9 213.8,215.7 214.8,215.4 215.8,215.1 216.9,214.8 217.9,214.4 218.9,214.1 219.9,213.7 220.9,213.3 221.9,212.9 223.0,212.4 224.0,212.0 225.0,211.5 226.0,211.0 227.0,210.5 228.1,210.0 229.1,209.5 230.1,208.9 231.1,208.3 232.1,207.7 233.1,207.1 234.2,206.5 235.2,205.9 236.2,205.2 237.2,204.5 238.2,203.8 239.3,203.1 240.3,202.4 241.3,201.6 242.3,200.8 243.3,200.0 244.3,199.1 245.4,198.2 246.4,197.4 247.4,196.5 248.4,195.5 249.4,194.6 250.5,193.6 251.5,192.6 252.5,191.6 253.5,190.5 254.5,189.4 255.5,188.3 256.6,187.2 257.6,186.1 258.6,185.0 259.6,183.8 260.6,182.7 261.7,181.6 262.7,180.4 263.7,179.2 264.7,178.1 265.7,176.9 266.7,175.7 267.8,174.5 268.8,173.2 269.8,172.0 270.8,170.7 271.8,169.4 272.9,168.0 273.9,166.6 274.9,165.3 275.9,163.8 276.9,162.4 277.9,161.0 279.0,159.6 280.0,158.2 281.0,156.9 282.0,155.5 283.0,154.1 284.1,152.7 285.1,151.4 286.1,150.0 287.1,148.7 288.1,147.4 289.1,146.0 290.2,144.7 291.2,143.4 292.2,142.1 293.2,140.9 294.2,139.6 295.2,138.3 296.3,137.1 297.3,135.8 298.3,134.6 299.3,133.4 300.3,132.1 301.4,130.9 302.4,129.7 303.4,128.5 304.4,127.3 305.4,126.1 306.4,124.9 307.5,123.8 308.5,122.6 309.5,121.4 310.5,120.2 311.5,119.1 312.6,117.9 313.6,116.7 314.6,115.5 315.6,114.4 316.6,113.2 317.6,112.1 318.7,110.9 319.7,109.8 320.7,108.7 321.7,107.6 322.7,106.6 323.8,105.6 324.8,104.5 325.8,103.5 326.8,102.6 327.8,101.6 328.8,100.6 329.9,99.7 330.9,98.7 331.9,97.8 332.9,96.9 333.9,96.0 335.0,95.0 336.0,94.1 337.0,93.3 338.0,92.4 339.0,91.5 340.0,90.6 341.1,89.8 342.1,88.9 343.1,88.1 344.1,87.3 345.1,86.5 346.2,85.7 347.2,84.9 348.2,84.1 349.2,83.3 350.2,82.5 351.2,81.7 352.3,80.9 353.3,80.2 354.3,79.4 355.3,78.6 356.3,77.9 357.4,77.1 358.4,76.3 359.4,75.6 360.4,74.8 361.4,74.1 362.4,73.3 363.5,72.6 364.5,71.9 365.5,71.2 366.5,70.4 367.5,69.7 368.6,69.0 369.6,68.4 370.6,67.7 371.6,67.1 372.6,66.5 373.6,65.9 374.7,65.4 375.7,64.8 376.7,64.3 377.7,63.8 378.7,63.3 379.7,62.9 380.8,62.4 381.8,61.9 382.8,61.4 383.8,60.9 384.8,60.4 385.9,59.9 386.9,59.4 387.9,59.0 388.9,58.5 389.9,58.0 390.9,57.5 392.0,57.0 393.0,56.5 394.0,56.0 395.0,55.5 396.0,55.0 397.1,54.5 398.1,54.0 399.1,53.5 400.1,53.0 401.1,52.5 402.1,52.0 403.2,51.5 404.2,51.0 405.2,50.5 406.2,50.0 407.2,49.5 408.3,49.0 409.3,48.5 410.3,48.0 411.3,47.5 412.3,47.0 413.3,46.6 414.4,46.1 415.4,45.6 416.4,45.1 417.4,44.6 418.4,44.1 419.5,43.6 420.5,43.1 421.5,42.6 422.5,42.1 423.5,41.7 424.5,41.2 425.6,40.7 426.6,40.2 427.6,39.7 428.6,39.2 429.6,38.7 430.7,38.3 431.7,37.8 432.7,37.4 433.7,37.0 434.7,36.6 435.7,36.3 436.8,35.9 437.8,35.6 438.8,35.3 439.8,35.0 440.8,34.7 441.9,34.4 442.9,34.0 443.9,33.7 444.9,33.4 445.9,33.1 446.9,32.8 448.0,32.5 449.0,32.2 450.0,31.9 451.0,31.6 452.0,31.3 453.1,31.0 454.1,30.8 455.1,30.6 456.1,30.4 457.1,30.2 458.1,30.0 459.2,29.8 460.2,29.6 461.2,29.4 462.2,29.3 463.2,29.1 464.2,28.9 465.3,28.7 466.3,28.6 467.3,28.4 468.3,28.2 469.3,28.0 470.4,27.9 471.4,27.7 472.4,27.5 473.4,27.4 474.4,27.3 475.4,27.1 476.5,27.0 477.5,26.9 478.5,26.8 479.5,26.7 480.5,26.6 481.6,26.5 482.6,26.4 483.6,26.3 484.6,26.2 485.6,26.2 486.6,26.1 487.7,26.0 488.7,25.9 489.7,25.8 490.7,25.7 491.7,25.6 492.8,25.5 493.8,25.4 494.8,25.3 495.8,25.2 496.8,25.2 497.8,25.1 498.9,25.0 499.9,24.9 500.9,24.8 501.9,24.7 502.9,24.7 504.0,24.6 505.0,24.5 506.0,24.4 507.0,24.3 508.0,24.2 509.0,24.2 510.1,24.1 511.1,24.0 512.1,23.9 513.1,23.8 514.1,23.7 515.2,23.6 516.2,23.5 517.2,23.4 518.2,23.3 519.2,23.2 520.2,23.1 521.3,23.0 522.3,22.9 523.3,22.8 524.3,22.7 525.3,22.6 526.4,22.5 527.4,22.4 528.4,22.3 529.4,22.2 530.4,22.1 531.4,22.0 532.5,21.9 533.5,21.8 534.5,21.7 535.5,21.6 536.5,21.5 537.6,21.4 538.6,21.3 539.6,21.2 540.6,21.1 541.6,21.1 542.6,21.0 543.7,20.9 544.7,20.8 545.7,20.7 546.7,20.6 547.7,20.5 548.7,20.4 549.8,20.4 550.8,20.3 551.8,20.2 552.8,20.1 553.8,20.0 554.9,19.9 555.9,19.8 556.9,19.7 557.9,19.7 558.9,19.6 559.9,19.5 561.0,19.4 562.0,19.3 563.0,19.2 564.0,19.1 565.0,19.0 566.1,19.0 567.1,18.9 568.1,18.8 569.1,18.7 570.1,18.6 571.1,18.5 572.2,18.4 573.2,18.3 574.2,18.3 575.2,18.2 576.2,18.1 577.3,18.0 578.3,17.9 579.3,17.8 580.3,17.7 581.3,17.7 582.3,17.6 583.4,17.5 584.4,17.4 585.4,17.3 586.4,17.3 587.4,17.2 588.5,17.1 589.5,17.1 590.5,17.0 591.5,17.0 592.5,16.9 593.5,16.9 594.6,16.8 595.6,16.7 596.6,16.7 597.6,16.6 598.6,16.6 599.7,16.5 600.7,16.5 601.7,16.4 602.7,16.4 603.7,16.3 604.7,16.3 605.8,16.2 606.8,16.2 607.8,16.1 608.8,16.0 609.8,16.0 610.9,15.9 611.9,15.9 612.9,15.8 613.9,15.8 614.9,15.7 615.9,15.7 617.0,15.6 618.0,15.6 619.0,15.5 620.0,15.5 621.0,15.4 622.1,15.3 623.1,15.3 624.1,15.2 625.1,15.2 626.1,15.1 627.1,15.1 628.2,15.0 629.2,15.0 630.2,14.9 631.2,14.9 632.2,14.8 633.2,14.8 634.3,14.7 635.3,14.7 636.3,14.6 637.3,14.6 638.3,14.5 639.4,14.5 640.4,14.5 641.4,14.5 642.4,14.4 643.4,14.4 644.4,14.4 645.5,14.4 646.5,14.3 647.5,14.3 648.5,14.3 649.5,14.3 650.6,14.2 651.6,14.2 652.6,14.2 653.6,14.2 654.6,14.1 655.6,14.1 656.7,14.1 657.7,14.1 658.7,14.0 659.7,14.0 660.7,14.0 661.8,14.0 662.8,13.9 663.8,13.9 664.8,13.9 665.8,13.9 666.8,13.8 667.9,13.8 668.9,13.8 669.9,13.8 670.9,13.7 671.9,13.7 673.0,13.7 674.0,13.7 675.0,13.6 676.0,13.6 677.0,13.6 678.0,13.6 679.1,13.5 680.1,13.5 681.1,13.5 682.1,13.5 683.1,13.4 684.2,13.4 685.2,13.4 686.2,13.4 687.2,13.3 688.2,13.3 689.2,13.3 690.3,13.3 691.3,13.3 692.3,13.2 693.3,13.2 694.3,13.2 695.4,13.2 696.4,13.2 697.4,13.2 698.4,13.1 699.4,13.1 700.4,13.1 701.5,13.1 702.5,13.1 703.5,13.1 704.5,13.0 705.5,13.0 706.6,13.0 707.6,13.0 708.6,13.0 709.6,13.0 710.6,12.9 711.6,12.9 712.7,12.9 713.7,12.9 714.7,12.9 715.7,12.9 716.7,12.8 717.7,12.8 718.8,12.8 719.8,12.8 720.8,12.8 721.8,12.8 722.8,12.7 723.9,12.7 724.9,12.7 725.9,12.7 726.9,12.7 727.9,12.7 728.9,12.6 730.0,12.6 731.0,12.6 732.0,12.6 733.0,12.6 734.0,12.6 735.1,12.5 736.1,12.5 737.1,12.5 738.1,12.5 739.1,12.5 740.1,12.5 741.2,12.5 742.2,12.5 743.2,12.5 744.2,12.4 745.2,12.4 746.3,12.4 747.3,12.4 748.3,12.4 749.3,12.4 750.3,12.4 751.3,12.4 752.4,12.4 753.4,12.4 754.4,12.4 755.4,12.4 756.4,12.3 757.5,12.3 758.5,12.3 759.5,12.3 760.5,12.3 761.5,12.3 762.5,12.3 763.6,12.3 764.6,12.3 765.6,12.3 766.6,12.3 767.6,12.3 768.7,12.2 769.7,12.2 770.7,12.2 771.7,12.2 772.7,12.2 773.7,12.2 774.8,12.2 775.8,12.2 776.8,12.2 777.8,12.2 778.8,12.2 779.9,12.2 780.9,12.1 781.9,12.1 782.9,12.1 783.9,12.1 784.9,12.1 786.0,12.1 787.0,12.1 788.0,12.1 789.0,12.1 790.0,12.1 791.1,12.1 792.1,12.1 793.1,12.0 794.1,12.0 795.1,12.0 796.1,12.0 797.2,12.0 798.2,12.0 799.2,12.0 800.2,12.0 801.2,12.0 802.2,12.0 803.3,12.0 804.3,12.0 805.3,11.9 806.3,11.9 807.3,11.9 808.4,11.9 809.4,11.9 810.4,11.9 811.4,11.9 812.4,11.9 813.4,11.9 814.5,11.9 815.5,11.9 816.5,11.9 817.5,11.8 818.5,11.8 819.6,11.8 820.6,11.8 821.6,11.8 822.6,11.8 823.6,11.8 824.6,11.8 825.7,11.8 826.7,11.8 827.7,11.8 828.7,11.8 829.7,11.7 830.8,11.7 831.8,11.7 832.8,11.7 833.8,11.7 834.8,11.7 835.8,11.7 836.9,11.7 837.9,11.7 838.9,11.7 839.9,11.7 840.9,11.7 842.0,11.6 843.0,11.6 844.0,11.6 845.0,11.6 846.0,11.6 847.0,11.6 848.1,11.6 849.1,11.6 850.1,11.6 851.1,11.6 852.1,11.6 853.2,11.6 854.2,11.6 855.2,11.6 856.2,11.6 857.2,11.6 858.2,11.5 859.3,11.5 860.3,11.5 861.3,11.5 862.3,11.5 863.3,11.5 864.4,11.5 865.4,11.5 866.4,11.5 867.4,11.5 868.4,11.5 869.4,11.5 870.5,11.5 871.5,11.5 872.5,11.5 873.5,11.5 874.5,11.4 875.6,11.4 876.6,11.4 877.6,11.4 878.6,11.4 879.6,11.4 880.6,11.4 881.7,11.4 882.7,11.4 883.7,11.4 884.7,11.4 885.7,11.4 886.7,11.4 887.8,11.4 888.8,11.4 889.8,11.4 890.8,11.3 891.8,11.3 892.9,11.3 893.9,11.3 894.9,11.3 895.9,11.3 896.9,11.3 897.9,11.3 899.0,11.3 900.0,11.3 901.0,11.3 902.0,11.3 903.0,11.3 904.1,11.3 905.1,11.3 906.1,11.3 907.1,11.2 908.1,11.2 909.1,11.2 910.2,11.2 911.2,11.2 912.2,11.2 913.2,11.2 914.2,11.2 915.3,11.2 916.3,11.2 917.3,11.2 918.3,11.2 919.3,11.2 920.3,11.2 921.4,11.2 922.4,11.2 923.4,11.2 924.4,11.1 925.4,11.1 926.5,11.1 927.5,11.1 928.5,11.1 929.5,11.1 930.5,11.1 931.5,11.1 932.6,11.1 933.6,11.1 934.6,11.1 935.6,11.1 936.6,11.1 937.7,11.1 938.7,11.1 939.7,11.1 940.7,11.0 941.7,11.0 942.7,11.0 943.8,11.0 944.8,11.0 945.8,11.0 946.8,11.0 947.8,11.0 948.9,11.0 949.9,11.0 950.9,11.0 951.9,11.0 952.9,11.0 953.9,11.0 955.0,11.0 956.0,11.0 957.0,10.9 958.0,10.9 959.0,10.9 960.1,10.9 961.1,10.9 962.1,10.9 963.1,10.9 964.1,10.9 965.1,10.9 966.2,10.9 967.2,10.9 968.2,10.9 969.2,10.9 970.2,10.9 971.2,10.9 972.3,10.9 973.3,10.9 974.3,10.8 975.3,10.8 976.3,10.8 977.4,10.8 978.4,10.8 979.4,10.8 980.4,10.8 981.4,10.8 982.4,10.8 983.5,10.8 984.5,10.8 985.5,10.8 986.5,10.8 987.5,10.8 988.6,10.8 989.6,10.8 990.6,10.8 991.6,10.7 992.6,10.7 993.6,10.7 994.7,10.7 995.7,10.7 996.7,10.7 997.7,10.7 998.7,10.7 999.8,10.7 1000.8,10.7 1001.8,10.7 1002.8,10.7 1003.8,10.7 1004.8,10.7 1005.9,10.7 1006.9,10.7 1007.9,10.7 1008.9,10.6 1009.9,10.6 1011.0,10.6 1012.0,10.6 1013.0,10.6 1014.0,10.6 1014.0,217.5" fill="#0072bd"/>
<path d="M225.5 217.5V213.1M233.5 217.5V209.1M240.5 217.5V204.1M248.5 217.5V197.9M255.5 217.5V190.4M262.5 217.5V182.2M270.5 217.5V173.4M277.5 217.5V163.5M285.5 217.5V153.4M292.5 217.5V143.8M299.5 217.5V134.8M307.5 217.5V126.0M314.5 217.5V117.5M322.5 217.5V109.3M329.5 217.5V102.1M336.5 217.5V95.4M344.5 217.5V89.2M351.5 217.5V83.4M359.5 217.5V77.8M366.5 217.5V72.5M373.5 217.5V67.8M381.5 217.5V64.1M388.5 217.5V60.6M396.5 217.5V57.0M403.5 217.5V53.4M410.5 217.5V49.8M418.5 217.5V46.2M425.5 217.5V42.7M433.5 217.5V39.3M440.5 217.5V36.8M447.5 217.5V34.5M455.5 217.5V32.5M462.5 217.5V31.2M470.5 217.5V29.9M477.5 217.5V28.9M484.5 217.5V28.2M492.5 217.5V27.6M499.5 217.5V26.9M507.5 217.5V26.3M514.5 217.5V25.7M521.5 217.5V25.0M529.5 217.5V24.2M536.5 217.5V23.5M544.5 217.5V22.8M551.5 217.5V22.2M558.5 217.5V21.6M566.5 217.5V20.9M573.5 217.5V20.3M581.5 217.5V19.7M588.5 217.5V19.1M595.5 217.5V18.7M603.5 217.5V18.3M610.5 217.5V17.9M618.5 217.5V17.6M625.5 217.5V17.2M632.5 217.5V16.8M640.5 217.5V16.5M647.5 217.5V16.3M655.5 217.5V16.1M662.5 217.5V15.9M669.5 217.5V15.8M677.5 217.5V15.6M684.5 217.5V15.4M692.5 217.5V15.2M699.5 217.5V15.1M706.5 217.5V15.0M714.5 217.5V14.9M721.5 217.5V14.8M729.5 217.5V14.6M736.5 217.5V14.5M743.5 217.5V14.4M751.5 217.5V14.4M758.5 217.5V14.3M766.5 217.5V14.3M773.5 217.5V14.2M780.5 217.5V14.1M788.5 217.5V14.1M795.5 217.5V14.0M803.5 217.5V14.0M810.5 217.5V13.9M817.5 217.5V13.8M825.5 217.5V13.8M832.5 217.5V13.7M840.5 217.5V13.7M847.5 217.5V13.6M854.5 217.5V13.6M862.5 217.5V13.5M869.5 217.5V13.5M877.5 217.5V13.4M884.5 217.5V13.4M891.5 217.5V13.3M899.5 217.5V13.3M906.5 217.5V13.3M914.5 217.5V13.2M921.5 217.5V13.2M928.5 217.5V13.1M936.5 217.5V13.1M943.5 217.5V13.0M951.5 217.5V13.0M958.5 217.5V12.9M965.5 217.5V12.9M973.5 217.5V12.9M980.5 217.5V12.8M988.5 217.5V12.8M995.5 217.5V12.7M1002.5 217.5V12.7M1010.5 217.5V12.6" stroke="#1f80c6" stroke-width="1" fill="none"/>
<path d="M0 217.5H1063" stroke="#262626" stroke-width="1" fill="none"/>
<path d="M46.8 220.6h0M47.9 220.6h0M48.9 220.6h0M49.9 220.6h0M50.9 220.6h0M51.9 220.7h0M52.9 220.7h0M54.0 220.7h0M55.0 220.7h0M56.0 220.7h0M57.0 220.7h0M58.0 220.7h0M59.1 220.7h0M60.1 220.7h0M61.1 220.7h0M62.1 220.7h0M63.1 220.7h0M64.1 220.7h0M65.2 220.8h0M66.2 220.8h0M67.2 220.8h0M68.2 220.8h0M69.2 220.8h0M70.3 220.8h0M71.3 220.8h0M72.3 220.8h0M73.3 220.8h0M74.3 220.8h0M75.3 220.8h0M76.4 220.8h0M77.4 220.8h0M78.4 220.9h0M79.4 220.9h0M80.4 220.9h0M81.5 220.9h0M82.5 220.9h0M83.5 220.9h0M84.5 220.9h0M85.5 220.9h0M86.5 220.9h0M87.6 220.9h0M88.6 220.9h0M89.6 220.9h0M90.6 220.9h0M91.6 221.0h0M92.7 221.0h0M93.7 221.0h0M94.7 221.0h0M95.7 221.0h0M96.7 221.0h0M97.7 221.0h0M98.8 221.0h0M99.8 221.0h0M100.8 221.0h0M101.8 221.0h0M102.8 221.0h0M103.9 221.0h0M104.9 221.1h0M105.9 221.1h0M106.9 221.1h0M107.9 221.1h0M108.9 221.1h0M110.0 221.1h0M111.0 221.1h0M112.0 221.1h0M113.0 221.1h0M114.0 221.1h0M115.1 221.1h0M116.1 221.1h0M117.1 221.1h0M118.1 221.2h0M119.1 221.2h0M120.1 221.2h0M121.2 221.2h0M122.2 221.2h0M123.2 221.2h0M124.2 221.2h0M125.2 221.2h0M126.2 221.2h0M127.3 221.2h0M128.3 221.2h0M129.3 221.2h0M130.3 221.2h0M131.3 221.2h0M132.4 221.2h0M133.4 221.2h0M134.4 221.2h0M135.4 221.1h0M136.4 221.1h0M137.4 221.1h0M138.5 221.1h0M139.5 221.1h0M140.5 221.1h0M141.5 221.1h0M142.5 221.0h0M143.6 221.0h0M144.6 221.0h0M145.6 221.0h0M146.6 221.0h0M147.6 221.0h0M148.6 221.0h0M149.7 220.9h0M150.7 220.9h0M151.7 220.9h0M152.7 220.9h0M153.7 220.9h0M154.8 220.9h0M155.8 220.9h0M156.8 220.8h0M157.8 220.8h0M158.8 220.8h0M159.8 220.8h0M160.9 220.7h0M161.9 220.7h0M162.9 220.6h0M163.9 220.6h0M164.9 220.6h0M166.0 220.5h0M167.0 220.5h0M168.0 220.4h0M169.0 220.4h0M170.0 220.4h0M171.0 220.3h0M172.1 220.3h0M173.1 220.2h0M174.1 220.2h0M175.1 220.1h0M176.1 220.1h0M177.2 220.1h0M178.2 220.0h0M179.2 219.9h0M180.2 219.9h0M181.2 219.8h0M182.2 219.7h0M183.3 219.6h0M184.3 219.6h0M185.3 219.5h0M186.3 219.4h0M187.3 219.3h0M188.4 219.2h0M189.4 219.1h0M190.4 219.1h0M191.4 219.0h0M192.4 218.9h0M193.4 218.8h0M194.5 218.7h0M195.5 218.6h0M196.5 218.6h0M197.5 218.5h0M198.5 218.4h0M199.6 218.2h0M200.6 218.1h0M201.6 218.0h0M202.6 217.9h0M203.6 217.7h0M204.6 217.6h0M205.7 217.4h0M206.7 217.3h0M207.7 217.1h0M208.7 216.9h0M209.7 216.7h0M210.7 216.4h0M211.8 216.2h0M212.8 215.9h0M213.8 215.7h0M214.8 215.4h0M215.8 215.1h0M216.9 214.8h0M217.9 214.4h0M218.9 214.1h0M219.9 213.7h0M220.9 213.3h0M221.9 212.9h0M223.0 212.4h0M224.0 212.0h0M225.0 211.5h0M226.0 211.0h0M227.0 210.5h0M228.1 210.0h0M229.1 209.5h0M230.1 208.9h0M231.1 208.3h0M232.1 207.7h0M233.1 207.1h0M234.2 206.5h0M235.2 205.9h0M236.2 205.2h0M237.2 204.5h0M238.2 203.8h0M239.3 203.1h0M240.3 202.4h0M241.3 201.6h0M242.3 200.8h0M243.3 200.0h0M244.3 199.1h0M245.4 198.2h0M246.4 197.4h0M247.4 196.5h0M248.4 195.5h0M249.4 194.6h0M250.5 193.6h0M251.5 192.6h0M252.5 191.6h0M253.5 190.5h0M254.5 189.4h0M255.5 188.3h0M256.6 187.2h0M257.6 186.1h0M258.6 185.0h0M259.6 183.8h0M260.6 182.7h0M261.7 181.6h0M262.7 180.4h0M263.7 179.2h0M264.7 178.1h0M265.7 176.9h0M266.7 175.7h0M267.8 174.5h0M268.8 173.2h0M269.8 172.0h0M270.8 170.7h0M271.8 169.4h0M272.9 168.0h0M273.9 166.6h0M274.9 165.3h0M275.9 163.8h0M276.9 162.4h0M277.9 161.0h0M279.0 159.6h0M280.0 158.2h0M281.0 156.9h0M282.0 155.5h0M283.0 154.1h0M284.1 152.7h0M285.1 151.4h0M286.1 150.0h0M287.1 148.7h0M288.1 147.4h0M289.1 146.0h0M290.2 144.7h0M291.2 143.4h0M292.2 142.1h0M293.2 140.9h0M294.2 139.6h0M295.2 138.3h0M296.3 137.1h0M297.3 135.8h0M298.3 134.6h0M299.3 133.4h0M300.3 132.1h0M301.4 130.9h0M302.4 129.7h0M303.4 128.5h0M304.4 127.3h0M305.4 126.1h0M306.4 124.9h0M307.5 123.8h0M308.5 122.6h0M309.5 121.4h0M310.5 120.2h0M311.5 119.1h0M312.6 117.9h0M313.6 116.7h0M314.6 115.5h0M315.6 114.4h0M316.6 113.2h0M317.6 112.1h0M318.7 110.9h0M319.7 109.8h0M320.7 108.7h0M321.7 107.6h0M322.7 106.6h0M323.8 105.6h0M324.8 104.5h0M325.8 103.5h0M326.8 102.6h0M327.8 101.6h0M328.8 100.6h0M329.9 99.7h0M330.9 98.7h0M331.9 97.8h0M332.9 96.9h0M333.9 96.0h0M335.0 95.0h0M336.0 94.1h0M337.0 93.3h0M338.0 92.4h0M339.0 91.5h0M340.0 90.6h0M341.1 89.8h0M342.1 88.9h0M343.1 88.1h0M344.1 87.3h0M345.1 86.5h0M346.2 85.7h0M347.2 84.9h0M348.2 84.1h0M349.2 83.3h0M350.2 82.5h0M351.2 81.7h0M352.3 80.9h0M353.3 80.2h0M354.3 79.4h0M355.3 78.6h0M356.3 77.9h0M357.4 77.1h0M358.4 76.3h0M359.4 75.6h0M360.4 74.8h0M361.4 74.1h0M362.4 73.3h0M363.5 72.6h0M364.5 71.9h0M365.5 71.2h0M366.5 70.4h0M367.5 69.7h0M368.6 69.0h0M369.6 68.4h0M370.6 67.7h0M371.6 67.1h0M372.6 66.5h0M373.6 65.9h0M374.7 65.4h0M375.7 64.8h0M376.7 64.3h0M377.7 63.8h0M378.7 63.3h0M379.7 62.9h0M380.8 62.4h0M381.8 61.9h0M382.8 61.4h0M383.8 60.9h0M384.8 60.4h0M385.9 59.9h0M386.9 59.4h0M387.9 59.0h0M388.9 58.5h0M389.9 58.0h0M390.9 57.5h0M392.0 57.0h0M393.0 56.5h0M394.0 56.0h0M395.0 55.5h0M396.0 55.0h0M397.1 54.5h0M398.1 54.0h0M399.1 53.5h0M400.1 53.0h0M401.1 52.5h0M402.1 52.0h0M403.2 51.5h0M404.2 51.0h0M405.2 50.5h0M406.2 50.0h0M407.2 49.5h0M408.3 49.0h0M409.3 48.5h0M410.3 48.0h0M411.3 47.5h0M412.3 47.0h0M413.3 46.6h0M414.4 46.1h0M415.4 45.6h0M416.4 45.1h0M417.4 44.6h0M418.4 44.1h0M419.5 43.6h0M420.5 43.1h0M421.5 42.6h0M422.5 42.1h0M423.5 41.7h0M424.5 41.2h0M425.6 40.7h0M426.6 40.2h0M427.6 39.7h0M428.6 39.2h0M429.6 38.7h0M430.7 38.3h0M431.7 37.8h0M432.7 37.4h0M433.7 37.0h0M434.7 36.6h0M435.7 36.3h0M436.8 35.9h0M437.8 35.6h0M438.8 35.3h0M439.8 35.0h0M440.8 34.7h0M441.9 34.4h0M442.9 34.0h0M443.9 33.7h0M444.9 33.4h0M445.9 33.1h0M446.9 32.8h0M448.0 32.5h0M449.0 32.2h0M450.0 31.9h0M451.0 31.6h0M452.0 31.3h0M453.1 31.0h0M454.1 30.8h0M455.1 30.6h0M456.1 30.4h0M457.1 30.2h0M458.1 30.0h0M459.2 29.8h0M460.2 29.6h0M461.2 29.4h0M462.2 29.3h0M463.2 29.1h0M464.2 28.9h0M465.3 28.7h0M466.3 28.6h0M467.3 28.4h0M468.3 28.2h0M469.3 28.0h0M470.4 27.9h0M471.4 27.7h0M472.4 27.5h0M473.4 27.4h0M474.4 27.3h0M475.4 27.1h0M476.5 27.0h0M477.5 26.9h0M478.5 26.8h0M479.5 26.7h0M480.5 26.6h0M481.6 26.5h0M482.6 26.4h0M483.6 26.3h0M484.6 26.2h0M485.6 26.2h0M486.6 26.1h0M487.7 26.0h0M488.7 25.9h0M489.7 25.8h0M490.7 25.7h0M491.7 25.6h0M492.8 25.5h0M493.8 25.4h0M494.8 25.3h0M495.8 25.2h0M496.8 25.2h0M497.8 25.1h0M498.9 25.0h0M499.9 24.9h0M500.9 24.8h0M501.9 24.7h0M502.9 24.7h0M504.0 24.6h0M505.0 24.5h0M506.0 24.4h0M507.0 24.3h0M508.0 24.2h0M509.0 24.2h0M510.1 24.1h0M511.1 24.0h0M512.1 23.9h0M513.1 23.8h0M514.1 23.7h0M515.2 23.6h0M516.2 23.5h0M517.2 23.4h0M518.2 23.3h0M519.2 23.2h0M520.2 23.1h0M521.3 23.0h0M522.3 22.9h0M523.3 22.8h0M524.3 22.7h0M525.3 22.6h0M526.4 22.5h0M527.4 22.4h0M528.4 22.3h0M529.4 22.2h0M530.4 22.1h0M531.4 22.0h0M532.5 21.9h0M533.5 21.8h0M534.5 21.7h0M535.5 21.6h0M536.5 21.5h0M537.6 21.4h0M538.6 21.3h0M539.6 21.2h0M540.6 21.1h0M541.6 21.1h0M542.6 21.0h0M543.7 20.9h0M544.7 20.8h0M545.7 20.7h0M546.7 20.6h0M547.7 20.5h0M548.7 20.4h0M549.8 20.4h0M550.8 20.3h0M551.8 20.2h0M552.8 20.1h0M553.8 20.0h0M554.9 19.9h0M555.9 19.8h0M556.9 19.7h0M557.9 19.7h0M558.9 19.6h0M559.9 19.5h0M561.0 19.4h0M562.0 19.3h0M563.0 19.2h0M564.0 19.1h0M565.0 19.0h0M566.1 19.0h0M567.1 18.9h0M568.1 18.8h0M569.1 18.7h0M570.1 18.6h0M571.1 18.5h0M572.2 18.4h0M573.2 18.3h0M574.2 18.3h0M575.2 18.2h0M576.2 18.1h0M577.3 18.0h0M578.3 17.9h0M579.3 17.8h0M580.3 17.7h0M581.3 17.7h0M582.3 17.6h0M583.4 17.5h0M584.4 17.4h0M585.4 17.3h0M586.4 17.3h0M587.4 17.2h0M588.5 17.1h0M589.5 17.1h0M590.5 17.0h0M591.5 17.0h0M592.5 16.9h0M593.5 16.9h0M594.6 16.8h0M595.6 16.7h0M596.6 16.7h0M597.6 16.6h0M598.6 16.6h0M599.7 16.5h0M600.7 16.5h0M601.7 16.4h0M602.7 16.4h0M603.7 16.3h0M604.7 16.3h0M605.8 16.2h0M606.8 16.2h0M607.8 16.1h0M608.8 16.0h0M609.8 16.0h0M610.9 15.9h0M611.9 15.9h0M612.9 15.8h0M613.9 15.8h0M614.9 15.7h0M615.9 15.7h0M617.0 15.6h0M618.0 15.6h0M619.0 15.5h0M620.0 15.5h0M621.0 15.4h0M622.1 15.3h0M623.1 15.3h0M624.1 15.2h0M625.1 15.2h0M626.1 15.1h0M627.1 15.1h0M628.2 15.0h0M629.2 15.0h0M630.2 14.9h0M631.2 14.9h0M632.2 14.8h0M633.2 14.8h0M634.3 14.7h0M635.3 14.7h0M636.3 14.6h0M637.3 14.6h0M638.3 14.5h0M639.4 14.5h0M640.4 14.5h0M641.4 14.5h0M642.4 14.4h0M643.4 14.4h0M644.4 14.4h0M645.5 14.4h0M646.5 14.3h0M647.5 14.3h0M648.5 14.3h0M649.5 14.3h0M650.6 14.2h0M651.6 14.2h0M652.6 14.2h0M653.6 14.2h0M654.6 14.1h0M655.6 14.1h0M656.7 14.1h0M657.7 14.1h0M658.7 14.0h0M659.7 14.0h0M660.7 14.0h0M661.8 14.0h0M662.8 13.9h0M663.8 13.9h0M664.8 13.9h0M665.8 13.9h0M666.8 13.8h0M667.9 13.8h0M668.9 13.8h0M669.9 13.8h0M670.9 13.7h0M671.9 13.7h0M673.0 13.7h0M674.0 13.7h0M675.0 13.6h0M676.0 13.6h0M677.0 13.6h0M678.0 13.6h0M679.1 13.5h0M680.1 13.5h0M681.1 13.5h0M682.1 13.5h0M683.1 13.4h0M684.2 13.4h0M685.2 13.4h0M686.2 13.4h0M687.2 13.3h0M688.2 13.3h0M689.2 13.3h0M690.3 13.3h0M691.3 13.3h0M692.3 13.2h0M693.3 13.2h0M694.3 13.2h0M695.4 13.2h0M696.4 13.2h0M697.4 13.2h0M698.4 13.1h0M699.4 13.1h0M700.4 13.1h0M701.5 13.1h0M702.5 13.1h0M703.5 13.1h0M704.5 13.0h0M705.5 13.0h0M706.6 13.0h0M707.6 13.0h0M708.6 13.0h0M709.6 13.0h0M710.6 12.9h0M711.6 12.9h0M712.7 12.9h0M713.7 12.9h0M714.7 12.9h0M715.7 12.9h0M716.7 12.8h0M717.7 12.8h0M718.8 12.8h0M719.8 12.8h0M720.8 12.8h0M721.8 12.8h0M722.8 12.7h0M723.9 12.7h0M724.9 12.7h0M725.9 12.7h0M726.9 12.7h0M727.9 12.7h0M728.9 12.6h0M730.0 12.6h0M731.0 12.6h0M732.0 12.6h0M733.0 12.6h0M734.0 12.6h0M735.1 12.5h0M736.1 12.5h0M737.1 12.5h0M738.1 12.5h0M739.1 12.5h0M740.1 12.5h0M741.2 12.5h0M742.2 12.5h0M743.2 12.5h0M744.2 12.4h0M745.2 12.4h0M746.3 12.4h0M747.3 12.4h0M748.3 12.4h0M749.3 12.4h0M750.3 12.4h0M751.3 12.4h0M752.4 12.4h0M753.4 12.4h0M754.4 12.4h0M755.4 12.4h0M756.4 12.3h0M757.5 12.3h0M758.5 12.3h0M759.5 12.3h0M760.5 12.3h0M761.5 12.3h0M762.5 12.3h0M763.6 12.3h0M764.6 12.3h0M765.6 12.3h0M766.6 12.3h0M767.6 12.3h0M768.7 12.2h0M769.7 12.2h0M770.7 12.2h0M771.7 12.2h0M772.7 12.2h0M773.7 12.2h0M774.8 12.2h0M775.8 12.2h0M776.8 12.2h0M777.8 12.2h0M778.8 12.2h0M779.9 12.2h0M780.9 12.1h0M781.9 12.1h0M782.9 12.1h0M783.9 12.1h0M784.9 12.1h0M786.0 12.1h0M787.0 12.1h0M788.0 12.1h0M789.0 12.1h0M790.0 12.1h0M791.1 12.1h0M792.1 12.1h0M793.1 12.0h0M794.1 12.0h0M795.1 12.0h0M796.1 12.0h0M797.2 12.0h0M798.2 12.0h0M799.2 12.0h0M800.2 12.0h0M801.2 12.0h0M802.2 12.0h0M803.3 12.0h0M804.3 12.0h0M805.3 11.9h0M806.3 11.9h0M807.3 11.9h0M808.4 11.9h0M809.4 11.9h0M810.4 11.9h0M811.4 11.9h0M812.4 11.9h0M813.4 11.9h0M814.5 11.9h0M815.5 11.9h0M816.5 11.9h0M817.5 11.8h0M818.5 11.8h0M819.6 11.8h0M820.6 11.8h0M821.6 11.8h0M822.6 11.8h0M823.6 11.8h0M824.6 11.8h0M825.7 11.8h0M826.7 11.8h0M827.7 11.8h0M828.7 11.8h0M829.7 11.7h0M830.8 11.7h0M831.8 11.7h0M832.8 11.7h0M833.8 11.7h0M834.8 11.7h0M835.8 11.7h0M836.9 11.7h0M837.9 11.7h0M838.9 11.7h0M839.9 11.7h0M840.9 11.7h0M842.0 11.6h0M843.0 11.6h0M844.0 11.6h0M845.0 11.6h0M846.0 11.6h0M847.0 11.6h0M848.1 11.6h0M849.1 11.6h0M850.1 11.6h0M851.1 11.6h0M852.1 11.6h0M853.2 11.6h0M854.2 11.6h0M855.2 11.6h0M856.2 11.6h0M857.2 11.6h0M858.2 11.5h0M859.3 11.5h0M860.3 11.5h0M861.3 11.5h0M862.3 11.5h0M863.3 11.5h0M864.4 11.5h0M865.4 11.5h0M866.4 11.5h0M867.4 11.5h0M868.4 11.5h0M869.4 11.5h0M870.5 11.5h0M871.5 11.5h0M872.5 11.5h0M873.5 11.5h0M874.5 11.4h0M875.6 11.4h0M876.6 11.4h0M877.6 11.4h0M878.6 11.4h0M879.6 11.4h0M880.6 11.4h0M881.7 11.4h0M882.7 11.4h0M883.7 11.4h0M884.7 11.4h0M885.7 11.4h0M886.7 11.4h0M887.8 11.4h0M888.8 11.4h0M889.8 11.4h0M890.8 11.3h0M891.8 11.3h0M892.9 11.3h0M893.9 11.3h0M894.9 11.3h0M895.9 11.3h0M896.9 11.3h0M897.9 11.3h0M899.0 11.3h0M900.0 11.3h0M901.0 11.3h0M902.0 11.3h0M903.0 11.3h0M904.1 11.3h0M905.1 11.3h0M906.1 11.3h0M907.1 11.2h0M908.1 11.2h0M909.1 11.2h0M910.2 11.2h0M911.2 11.2h0M912.2 11.2h0M913.2 11.2h0M914.2 11.2h0M915.3 11.2h0M916.3 11.2h0M917.3 11.2h0M918.3 11.2h0M919.3 11.2h0M920.3 11.2h0M921.4 11.2h0M922.4 11.2h0M923.4 11.2h0M924.4 11.1h0M925.4 11.1h0M926.5 11.1h0M927.5 11.1h0M928.5 11.1h0M929.5 11.1h0M930.5 11.1h0M931.5 11.1h0M932.6 11.1h0M933.6 11.1h0M934.6 11.1h0M935.6 11.1h0M936.6 11.1h0M937.7 11.1h0M938.7 11.1h0M939.7 11.1h0M940.7 11.0h0M941.7 11.0h0M942.7 11.0h0M943.8 11.0h0M944.8 11.0h0M945.8 11.0h0M946.8 11.0h0M947.8 11.0h0M948.9 11.0h0M949.9 11.0h0M950.9 11.0h0M951.9 11.0h0M952.9 11.0h0M953.9 11.0h0M955.0 11.0h0M956.0 11.0h0M957.0 10.9h0M958.0 10.9h0M959.0 10.9h0M960.1 10.9h0M961.1 10.9h0M962.1 10.9h0M963.1 10.9h0M964.1 10.9h0M965.1 10.9h0M966.2 10.9h0M967.2 10.9h0M968.2 10.9h0M969.2 10.9h0M970.2 10.9h0M971.2 10.9h0M972.3 10.9h0M973.3 10.9h0M974.3 10.8h0M975.3 10.8h0M976.3 10.8h0M977.4 10.8h0M978.4 10.8h0M979.4 10.8h0M980.4 10.8h0M981.4 10.8h0M982.4 10.8h0M983.5 10.8h0M984.5 10.8h0M985.5 10.8h0M986.5 10.8h0M987.5 10.8h0M988.6 10.8h0M989.6 10.8h0M990.6 10.8h0M991.6 10.7h0M992.6 10.7h0M993.6 10.7h0M994.7 10.7h0M995.7 10.7h0M996.7 10.7h0M997.7 10.7h0M998.7 10.7h0M999.8 10.7h0M1000.8 10.7h0M1001.8 10.7h0M1002.8 10.7h0M1003.8 10.7h0M1004.8 10.7h0M1005.9 10.7h0M1006.9 10.7h0M1007.9 10.7h0M1008.9 10.6h0M1009.9 10.6h0M1011.0 10.6h0M1012.0 10.6h0M1013.0 10.6h0" stroke="#000" stroke-width="3.6" stroke-linecap="round" fill="none"/>
<path d="M26.5 0v11M26.5 231v-11M128.5 0v11M128.5 231v-11M229.5 0v11M229.5 231v-11M331.5 0v11M331.5 231v-11M433.5 0v11M433.5 231v-11M535.5 0v11M535.5 231v-11M636.5 0v11M636.5 231v-11M738.5 0v11M738.5 231v-11M840.5 0v11M840.5 231v-11M941.5 0v11M941.5 231v-11M1043.5 0v11M1043.5 231v-11M0 217.5h11M1063 217.5h-11M0 176.5h11M1063 176.5h-11M0 134.5h11M1063 134.5h-11M0 93.5h11M1063 93.5h-11M0 51.5h11M1063 51.5h-11M0 10.5h11M1063 10.5h-11" stroke="#262626" stroke-width="1" fill="none"/>
<rect x="0.5" y="0.5" width="1062" height="230" fill="none" stroke="#262626" stroke-width="1"/>
</svg>
<div class="ax" style="left:732.9px;top:827.5px;width:40px;text-align:center">20</div>
<div class="ax" style="left:834.6px;top:827.5px;width:40px;text-align:center">30</div>
<div class="ax" style="left:936.3px;top:827.5px;width:40px;text-align:center">40</div>
<div class="ax" style="left:1038.0px;top:827.5px;width:40px;text-align:center">50</div>
<div class="ax" style="left:1139.7px;top:827.5px;width:40px;text-align:center">60</div>
<div class="ax" style="left:1241.4px;top:827.5px;width:40px;text-align:center">70</div>
<div class="ax" style="left:1343.1px;top:827.5px;width:40px;text-align:center">80</div>
<div class="ax" style="left:1444.8px;top:827.5px;width:40px;text-align:center">90</div>
<div class="ax" style="left:1546.5px;top:827.5px;width:40px;text-align:center">100</div>
<div class="ax" style="left:1648.2px;top:827.5px;width:40px;text-align:center">110</div>
<div class="ax" style="left:1749.9px;top:827.5px;width:40px;text-align:center">120</div>
<div class="ax" style="left:681.5px;top:801.1px;width:40px;text-align:right">0</div>
<div class="ax" style="left:681.5px;top:759.6px;width:40px;text-align:right">20</div>
<div class="ax" style="left:681.5px;top:718.1px;width:40px;text-align:right">40</div>
<div class="ax" style="left:681.5px;top:676.6px;width:40px;text-align:right">60</div>
<div class="ax" style="left:681.5px;top:635.1px;width:40px;text-align:right">80</div>
<div class="ax" style="left:681.5px;top:593.6px;width:40px;text-align:right">100</div>
<div class="ax" style="left:1256.5px;top:845.5px;font-size:14.2px">t</div>
<div class="ax" style="left:681px;top:698.5px;width:12px;font-size:14.2px;transform:rotate(-90deg);transform-origin:50% 50%">m</div>
<div class="a" style="left:1658px;top:309px;width:119px;height:36px;background:#fff;border:1px solid #262626"></div>
<div class="a" style="left:1684px;top:317px;width:5px;height:5px;border-radius:50%;background:#000"></div>
<div class="a" style="left:1666px;top:334px;width:40px;height:2px;background:#2474b5"></div>
<div class="ax" style="left:1711px;top:312px;font-size:12px;color:#111">m vs. t</div>
<div class="ax" style="left:1711px;top:327px;font-size:12px;color:#111">untitled fit 3</div>
<div class="a" style="left:1599px;top:605px;width:178px;height:21px;background:#fff;border:1px solid #4a4a4a"></div>
<div class="a" style="left:1607px;top:615px;width:29px;height:1px;background:#2474b5"></div>
<div class="a" style="left:1633px;top:613px;width:5px;height:5px;border-radius:50%;background:#000"></div>
<div class="ax" style="left:1652px;top:608px;font-size:12px;color:#111">untitled fit 3 - residuals</div>


<!-- ===== table of fits ===== -->
<div class="a" style="left:2px;top:870px;width:1911px;height:19px;background:linear-gradient(#ffffff,#f6f6f6 40%,#e2e2e2 100%);border-top:1px solid #b4b4b4"></div>
<div class="hl" style="top:889px;background:#8c8c8c"></div>
<div class="vl" style="left:2px;top:870px;height:160px;background:#9a9a9a"></div>
<div class="t" style="left:8px;top:873px;color:#333;letter-spacing:-0.08px">Table of Fits</div>
<svg class="a" style="left:1899px;top:873px" width="13" height="13" viewBox="0 0 13 13"><circle cx="6.5" cy="6.5" r="5.3" fill="#fafafa" stroke="#6e6e6e" stroke-width="1"/><path d="M3.6 4.8H9.4L6.5 8.8Z" fill="#333"/></svg>
<div class="a" style="left:3px;top:890px;width:1910px;height:26px;background:linear-gradient(#ffffff 0%,#fbfbfc 55%,#f1f2f4 100%)"></div>
<div class="t" style="left:8px;top:898px;letter-spacing:0.09px">Fit name</div>
<div class="vl" style="left:160px;top:890px;height:25px;background:#e2e3e6"></div>
<div class="t" style="left:168px;top:898px;letter-spacing:-0.15px">Data</div>
<div class="vl" style="left:320px;top:890px;height:25px;background:#e2e3e6"></div>
<div class="t" style="left:327px;top:898px;letter-spacing:-0.2px">Fit type</div>
<div class="vl" style="left:480px;top:890px;height:25px;background:#e2e3e6"></div>
<div class="t" style="left:486px;top:898px;letter-spacing:-0.2px">SSE</div>
<div class="vl" style="left:639px;top:890px;height:25px;background:#e2e3e6"></div>
<div class="t" style="left:646px;top:898px;letter-spacing:-0.55px">R-square</div>
<div class="vl" style="left:799px;top:890px;height:25px;background:#e2e3e6"></div>
<div class="t" style="left:806px;top:898px;letter-spacing:-0.60px">DFE</div>
<div class="vl" style="left:958px;top:890px;height:25px;background:#e2e3e6"></div>
<div class="t" style="left:965px;top:898px;letter-spacing:-0.02px">Adj R-sq</div>
<div class="vl" style="left:1118px;top:890px;height:25px;background:#e2e3e6"></div>
<div class="t" style="left:1125px;top:898px;letter-spacing:-0.60px">RMSE</div>
<div class="vl" style="left:1278px;top:890px;height:25px;background:#e2e3e6"></div>
<div class="t" style="left:1284px;top:898px;letter-spacing:0.07px"># Coeff</div>
<div class="vl" style="left:1437px;top:890px;height:25px;background:#e2e3e6"></div>
<div class="t" style="left:1444px;top:898px;letter-spacing:-0.02px">Validation Data</div>
<div class="vl" style="left:1596px;top:890px;height:25px;background:#e2e3e6"></div>
<div class="t" style="left:1604px;top:898px;letter-spacing:-0.34px">Validation SSE</div>
<div class="vl" style="left:1756px;top:890px;height:25px;background:#e2e3e6"></div>
<div class="t" style="left:1763px;top:898px;letter-spacing:-0.23px">Validation RMSE</div>
<svg class="a" style="left:58px;top:902px" width="9" height="5" viewBox="0 0 9 5"><path d="M0 5L4.5 0.3L9 5Z" fill="#b4b4b4"/></svg>
<div class="a" style="left:3px;top:916px;width:1910px;height:18px;background:#fff"></div>
<div class="a" style="left:4px;top:919px;width:12px;height:11px;border:1px solid #2f8a2a;background:linear-gradient(135deg,#7fd66f,#3fae35 60%,#2f9a2a)"></div>
<div class="t" style="left:20px;top:919px;letter-spacing:0.13px">untitled fit 1</div>
<div class="a" style="left:164px;top:919px;width:156px;height:14px;overflow:hidden"><div class="t" style="left:0;top:0;letter-spacing:-0.46px">R3 vs. t</div></div>
<div class="a" style="left:323px;top:919px;width:156px;height:14px;overflow:hidden"><div class="t" style="left:0;top:0;letter-spacing:-0.25px">m_k.*exp(-A/(D+1)*t.^(D+1))</div></div>
<div class="a" style="left:482px;top:919px;width:156px;height:14px;overflow:hidden"><div class="t" style="left:0;top:0;letter-spacing:-0.25px">1.9879e-16</div></div>
<div class="a" style="left:642px;top:919px;width:156px;height:14px;overflow:hidden"><div class="t" style="left:0;top:0;letter-spacing:-0.25px">1</div></div>
<div class="a" style="left:802px;top:919px;width:156px;height:14px;overflow:hidden"><div class="t" style="left:0;top:0;letter-spacing:-0.57px">996</div></div>
<div class="a" style="left:961px;top:919px;width:156px;height:14px;overflow:hidden"><div class="t" style="left:0;top:0;letter-spacing:-0.25px">1</div></div>
<div class="a" style="left:1121px;top:919px;width:156px;height:14px;overflow:hidden"><div class="t" style="left:0;top:0;letter-spacing:-0.39px">4.4695e-10</div></div>
<div class="a" style="left:1280px;top:919px;width:156px;height:14px;overflow:hidden"><div class="t" style="left:0;top:0;letter-spacing:-0.25px">4</div></div>
<div class="a" style="left:3px;top:934px;width:1910px;height:18px;background:#fff"></div>
<div class="a" style="left:4px;top:937px;width:12px;height:11px;border:1px solid #8f9bc0;background:linear-gradient(135deg,#e8ecf8 0%,#e8ecf8 48%,#aab4d8 52%,#b8c2e2 100%)"></div>
<div class="t" style="left:20px;top:937px;letter-spacing:0.13px">untitled fit 2</div>
<div class="a" style="left:323px;top:937px;width:156px;height:14px;overflow:hidden"><div class="t" style="left:0;top:0;letter-spacing:-0.25px">linearinterp</div></div>
<div class="a" style="left:3px;top:952px;width:1910px;height:18px;background:#fff"></div>
<div class="a" style="left:4px;top:955px;width:12px;height:11px;border:1px solid #2f8a2a;background:linear-gradient(135deg,#7fd66f,#3fae35 60%,#2f9a2a)"></div>
<div class="t" style="left:20px;top:955px;letter-spacing:0.19px">untitled fit 3</div>
<div class="a" style="left:164px;top:955px;width:156px;height:14px;overflow:hidden"><div class="t" style="left:0;top:0;letter-spacing:0.08px">m vs. t</div></div>
<div class="a" style="left:323px;top:955px;width:156px;height:14px;overflow:hidden"><div class="t" style="left:0;top:0;letter-spacing:-0.25px">1-(m_k*exp(-A/(D+1)*t^(D+1)))</div></div>
<div class="a" style="left:482px;top:955px;width:156px;height:14px;overflow:hidden"><div class="t" style="left:0;top:0;letter-spacing:-0.25px">6.0596e+06</div></div>
<div class="a" style="left:642px;top:955px;width:156px;height:14px;overflow:hidden"><div class="t" style="left:0;top:0;letter-spacing:-0.14px">-3.0112</div></div>
<div class="a" style="left:802px;top:955px;width:156px;height:14px;overflow:hidden"><div class="t" style="left:0;top:0;letter-spacing:-0.57px">947</div></div>
<div class="a" style="left:961px;top:955px;width:156px;height:14px;overflow:hidden"><div class="t" style="left:0;top:0;letter-spacing:-0.28px">-3.0197</div></div>
<div class="a" style="left:1121px;top:955px;width:156px;height:14px;overflow:hidden"><div class="t" style="left:0;top:0;letter-spacing:-0.57px">79.9930</div></div>
<div class="a" style="left:1280px;top:955px;width:156px;height:14px;overflow:hidden"><div class="t" style="left:0;top:0;letter-spacing:-0.25px">3</div></div>
<div class="a" style="left:3px;top:970px;width:1910px;height:18px;background:#fff"></div>
<div class="a" style="left:4px;top:973px;width:12px;height:11px;border:1px solid #2f8a2a;background:linear-gradient(135deg,#7fd66f,#3fae35 60%,#2f9a2a)"></div>
<div class="t" style="left:20px;top:973px;letter-spacing:0.13px">untitled fit 4</div>
<div class="a" style="left:164px;top:973px;width:156px;height:14px;overflow:hidden"><div class="t" style="left:0;top:0;letter-spacing:0.08px">m vs. t</div></div>
<div class="a" style="left:323px;top:973px;width:156px;height:14px;overflow:hidden"><div class="t" style="left:0;top:0;letter-spacing:-0.60px">exp2</div></div>
<div class="a" style="left:482px;top:973px;width:156px;height:14px;overflow:hidden"><div class="t" style="left:0;top:0;letter-spacing:-0.25px">1.1555e+05</div></div>
<div class="a" style="left:642px;top:973px;width:156px;height:14px;overflow:hidden"><div class="t" style="left:0;top:0;letter-spacing:-0.58px">0.9235</div></div>
<div class="a" style="left:802px;top:973px;width:156px;height:14px;overflow:hidden"><div class="t" style="left:0;top:0;letter-spacing:-0.57px">946</div></div>
<div class="a" style="left:961px;top:973px;width:156px;height:14px;overflow:hidden"><div class="t" style="left:0;top:0;letter-spacing:-0.58px">0.9233</div></div>
<div class="a" style="left:1121px;top:973px;width:156px;height:14px;overflow:hidden"><div class="t" style="left:0;top:0;letter-spacing:-0.42px">11.0519</div></div>
<div class="a" style="left:1280px;top:973px;width:156px;height:14px;overflow:hidden"><div class="t" style="left:0;top:0;letter-spacing:-0.25px">4</div></div>
<div class="vl" style="left:162px;top:916px;height:73px;background:#8e8e8e"></div>
<div class="vl" style="left:321px;top:916px;height:73px;background:#8e8e8e"></div>
<div class="vl" style="left:480px;top:916px;height:73px;background:#8e8e8e"></div>
<div class="vl" style="left:640px;top:916px;height:73px;background:#8e8e8e"></div>
<div class="vl" style="left:800px;top:916px;height:73px;background:#8e8e8e"></div>
<div class="vl" style="left:959px;top:916px;height:73px;background:#8e8e8e"></div>
<div class="vl" style="left:1119px;top:916px;height:73px;background:#8e8e8e"></div>
<div class="vl" style="left:1278px;top:916px;height:73px;background:#8e8e8e"></div>
<div class="vl" style="left:1438px;top:916px;height:73px;background:#8e8e8e"></div>
<div class="vl" style="left:1598px;top:916px;height:73px;background:#8e8e8e"></div>
<div class="vl" style="left:1757px;top:916px;height:73px;background:#8e8e8e"></div>
<div class="hl" style="top:1029px;left:2px;background:#9a9a9a"></div>
<div class="hl" style="top:934px;left:3px;background:#8e8e8e"></div>
<div class="hl" style="top:952px;left:3px;background:#8e8e8e"></div>
<div class="hl" style="top:970px;left:3px;background:#8e8e8e"></div>
<div class="hl" style="top:988px;left:3px;background:#8e8e8e"></div>

<!-- ===== dialog ===== -->
<div class="a" style="left:353px;top:511px;width:300px;height:499px;border-radius:7px;box-shadow:0 0 2px 1px rgba(0,0,0,.5),-1px 1px 6px 1px rgba(0,0,0,.35),3px 4px 13px 2px rgba(0,0,0,.58)"></div>
<div class="a" style="left:353px;top:511px;width:300px;height:499px;border:1px solid #2b3340;border-radius:7px;background:linear-gradient(180deg,#c8def6 0px,#c3dbf4 27px,#d8e6f6 31px,#d8e6f6 140px,#a9caec 146px,#a8c9eb 100%);box-shadow:inset 0 0 0 1px #e4effb"></div>
<div class="a" style="left:375px;top:514px;width:220px;height:25px;background:radial-gradient(ellipse at 30% 50%,rgba(255,255,255,.55),rgba(255,255,255,0) 70%)"></div>
<svg class="a" style="left:361px;top:517px" width="17" height="17" viewBox="0 0 17 17">
<path d="M0.8 9.6L5.6 7.2L9 10.6L5.4 13.2Z" fill="#3d74b4"/><path d="M5.6 7.2L7.8 5.4L9 10.6Z" fill="#7fb0dd"/>
<path d="M5.4 13.2L9 10.6C10 7 10.4 2.6 11.3 1.2C12.6 3.4 14.4 9.4 16.2 12.4L12.8 11.2L9.4 15.4Z" fill="#d6531c"/>
<path d="M11.3 1.2C12.6 3.4 14.4 9.4 16.2 12.4L12.8 11.2C12.4 7 12 4 11.3 1.2Z" fill="#84240f"/><path d="M5.4 13.2L9 10.6L9.4 15.4L7.2 15.8Z" fill="#f3a12c"/>
</svg>
<div class="t" style="left:382px;top:519px;letter-spacing:0.13px">Fit Options</div>
<div class="a" style="left:599px;top:512px;width:47px;height:19px;border:1px solid #4a2a28;border-top:none;border-radius:0 0 4px 4px;background:linear-gradient(#e9a99c 0%,#d9786a 45%,#c4412f 50%,#c8503a 80%,#d97a5a 100%);box-shadow:inset 0 0 0 1px rgba(255,255,255,.45)"></div>
<svg class="a" style="left:617px;top:516px" width="12" height="11" viewBox="0 0 12 11"><path d="M1.8 1.5L10.2 9.5M10.2 1.5L1.8 9.5" stroke="#5e3a36" stroke-width="4.6" stroke-linecap="square"/><path d="M1.8 1.5L10.2 9.5M10.2 1.5L1.8 9.5" stroke="#fff" stroke-width="2.7" stroke-linecap="square"/></svg>
<div class="a" style="left:360px;top:540px;width:287px;height:464px;background:#f0f0f0;border:1px solid #6d7f94;box-shadow:0 0 0 1px rgba(255,255,255,.55)"></div>
<div class="t" style="left:366px;top:548px;letter-spacing:0.32px">Method:</div>
<div class="t" style="left:366px;top:572px;letter-spacing:-0.23px">Robust:</div>
<div class="t" style="left:366px;top:599px;letter-spacing:0.35px">Algorithm:</div>
<div class="t" style="left:366px;top:626px;letter-spacing:0.12px">DiffMinChange:</div>
<div class="t" style="left:366px;top:653px;letter-spacing:-0.06px">DiffMaxChange:</div>
<div class="t" style="left:366px;top:680px;letter-spacing:-0.44px">MaxFunEvals:</div>
<div class="t" style="left:366px;top:707px;letter-spacing:-0.18px">MaxIter:</div>
<div class="t" style="left:366px;top:734px;letter-spacing:0.11px">TolFun:</div>
<div class="t" style="left:366px;top:761px;letter-spacing:0.00px">TolX:</div>
<div class="t" style="left:459px;top:548px;letter-spacing:-0.23px">NonlinearLeastSquares</div>
<div class="combo" style="left:459px;top:568px;width:181px;height:21px"><i style="top:8px;right:5px"></i></div>
<div class="a" style="left:462px;top:570px;width:158px;height:17px;border:1px dotted #111"></div>
<div class="t" style="left:464px;top:572px;letter-spacing:0.80px">Off</div>
<div class="combo" style="left:459px;top:595px;width:181px;height:21px"><i style="top:8px;right:5px"></i></div>
<div class="t" style="left:463px;top:599px;letter-spacing:0.08px">Levenberg-Marquardt</div>
<div class="field" style="left:459px;top:621px;width:181px;height:22px"></div>
<div class="t" style="left:540px;width:96px;text-align:right;top:626px;letter-spacing:-0.15px">1e-08</div>
<div class="field" style="left:459px;top:648px;width:181px;height:22px"></div>
<div class="t" style="left:540px;width:96px;text-align:right;top:653px;letter-spacing:-0.54px">0.1</div>
<div class="field" style="left:459px;top:675px;width:181px;height:22px"></div>
<div class="t" style="left:540px;width:96px;text-align:right;top:680px;letter-spacing:-0.52px">600</div>
<div class="field" style="left:459px;top:702px;width:181px;height:22px"></div>
<div class="t" style="left:540px;width:96px;text-align:right;top:707px;letter-spacing:-0.60px">40000</div>
<div class="field" style="left:459px;top:729px;width:181px;height:22px"></div>
<div class="t" style="left:540px;width:96px;text-align:right;top:734px;letter-spacing:-0.15px">1e-06</div>
<div class="field" style="left:459px;top:756px;width:181px;height:22px"></div>
<div class="t" style="left:540px;width:96px;text-align:right;top:761px;letter-spacing:-0.15px">1e-06</div>
<div class="a" style="left:366px;top:783px;width:274px;height:180px;border:1px solid #8e8e8e;background:#f0f0f0"></div>
<div class="a" style="left:367px;top:784px;width:272px;height:25px;background:linear-gradient(#ffffff 0%,#fbfbfc 55%,#f1f2f4 100%)"></div>
<div class="t" style="left:372px;top:792px;letter-spacing:0.05px">Unknowns</div>
<div class="t" style="left:440px;top:792px;letter-spacing:-0.00px">StartPoint</div>
<div class="vl" style="left:433px;top:784px;height:25px;background:#e2e3e6"></div>
<div class="t" style="left:508px;top:792px;letter-spacing:0.03px">Lower</div>
<div class="vl" style="left:501px;top:784px;height:25px;background:#e2e3e6"></div>
<div class="t" style="left:576px;top:792px;letter-spacing:-0.05px">Upper</div>
<div class="vl" style="left:569px;top:784px;height:25px;background:#e2e3e6"></div>
<div class="a" style="left:367px;top:810px;width:272px;height:18px;background:#fff"></div>
<div class="t" style="left:368px;top:813px">A</div>
<div class="t" style="left:434px;width:63px;text-align:right;top:813px;letter-spacing:-0.2px">1</div>
<div class="t" style="left:502px;width:67px;text-align:right;top:813px;letter-spacing:0.55px">-Inf</div>
<div class="t" style="left:570px;width:68px;text-align:right;top:813px;letter-spacing:0.58px">Inf</div>
<div class="a" style="left:367px;top:828px;width:272px;height:18px;background:#fff"></div>
<div class="t" style="left:368px;top:831px">D</div>
<div class="t" style="left:434px;width:66px;text-align:right;top:831px;letter-spacing:-0.56px">0.2417</div>
<div class="t" style="left:502px;width:67px;text-align:right;top:831px;letter-spacing:0.55px">-Inf</div>
<div class="t" style="left:570px;width:68px;text-align:right;top:831px;letter-spacing:0.58px">Inf</div>
<div class="a" style="left:367px;top:846px;width:272px;height:18px;background:#fff"></div>
<div class="t" style="left:368px;top:849px;letter-spacing:0.26px">m_k</div>
<div class="t" style="left:434px;width:66px;text-align:right;top:849px;letter-spacing:-0.56px">0.4039</div>
<div class="t" style="left:502px;width:67px;text-align:right;top:849px;letter-spacing:0.55px">-Inf</div>
<div class="t" style="left:570px;width:68px;text-align:right;top:849px;letter-spacing:0.58px">Inf</div>
<div class="vl" style="left:434px;top:810px;height:55px;background:#8e8e8e"></div>
<div class="vl" style="left:502px;top:810px;height:55px;background:#8e8e8e"></div>
<div class="vl" style="left:570px;top:810px;height:55px;background:#8e8e8e"></div>
<div class="vl" style="left:638px;top:810px;height:55px;background:#8e8e8e"></div>
<div class="a" style="left:367px;top:828px;width:272px;height:1px;background:#8e8e8e"></div>
<div class="a" style="left:367px;top:846px;width:272px;height:1px;background:#8e8e8e"></div>
<div class="a" style="left:367px;top:864px;width:272px;height:1px;background:#8e8e8e"></div>
<div class="a" style="left:434px;top:810px;width:69px;height:19px;border:1px solid #6a6a6a;box-shadow:inset 0 0 0 1px #d8d8d8"></div>
<div class="btn" style="left:581px;top:974px;width:58px;height:23px;line-height:22px;letter-spacing:-0.30px">Close</div>

</body></html>
